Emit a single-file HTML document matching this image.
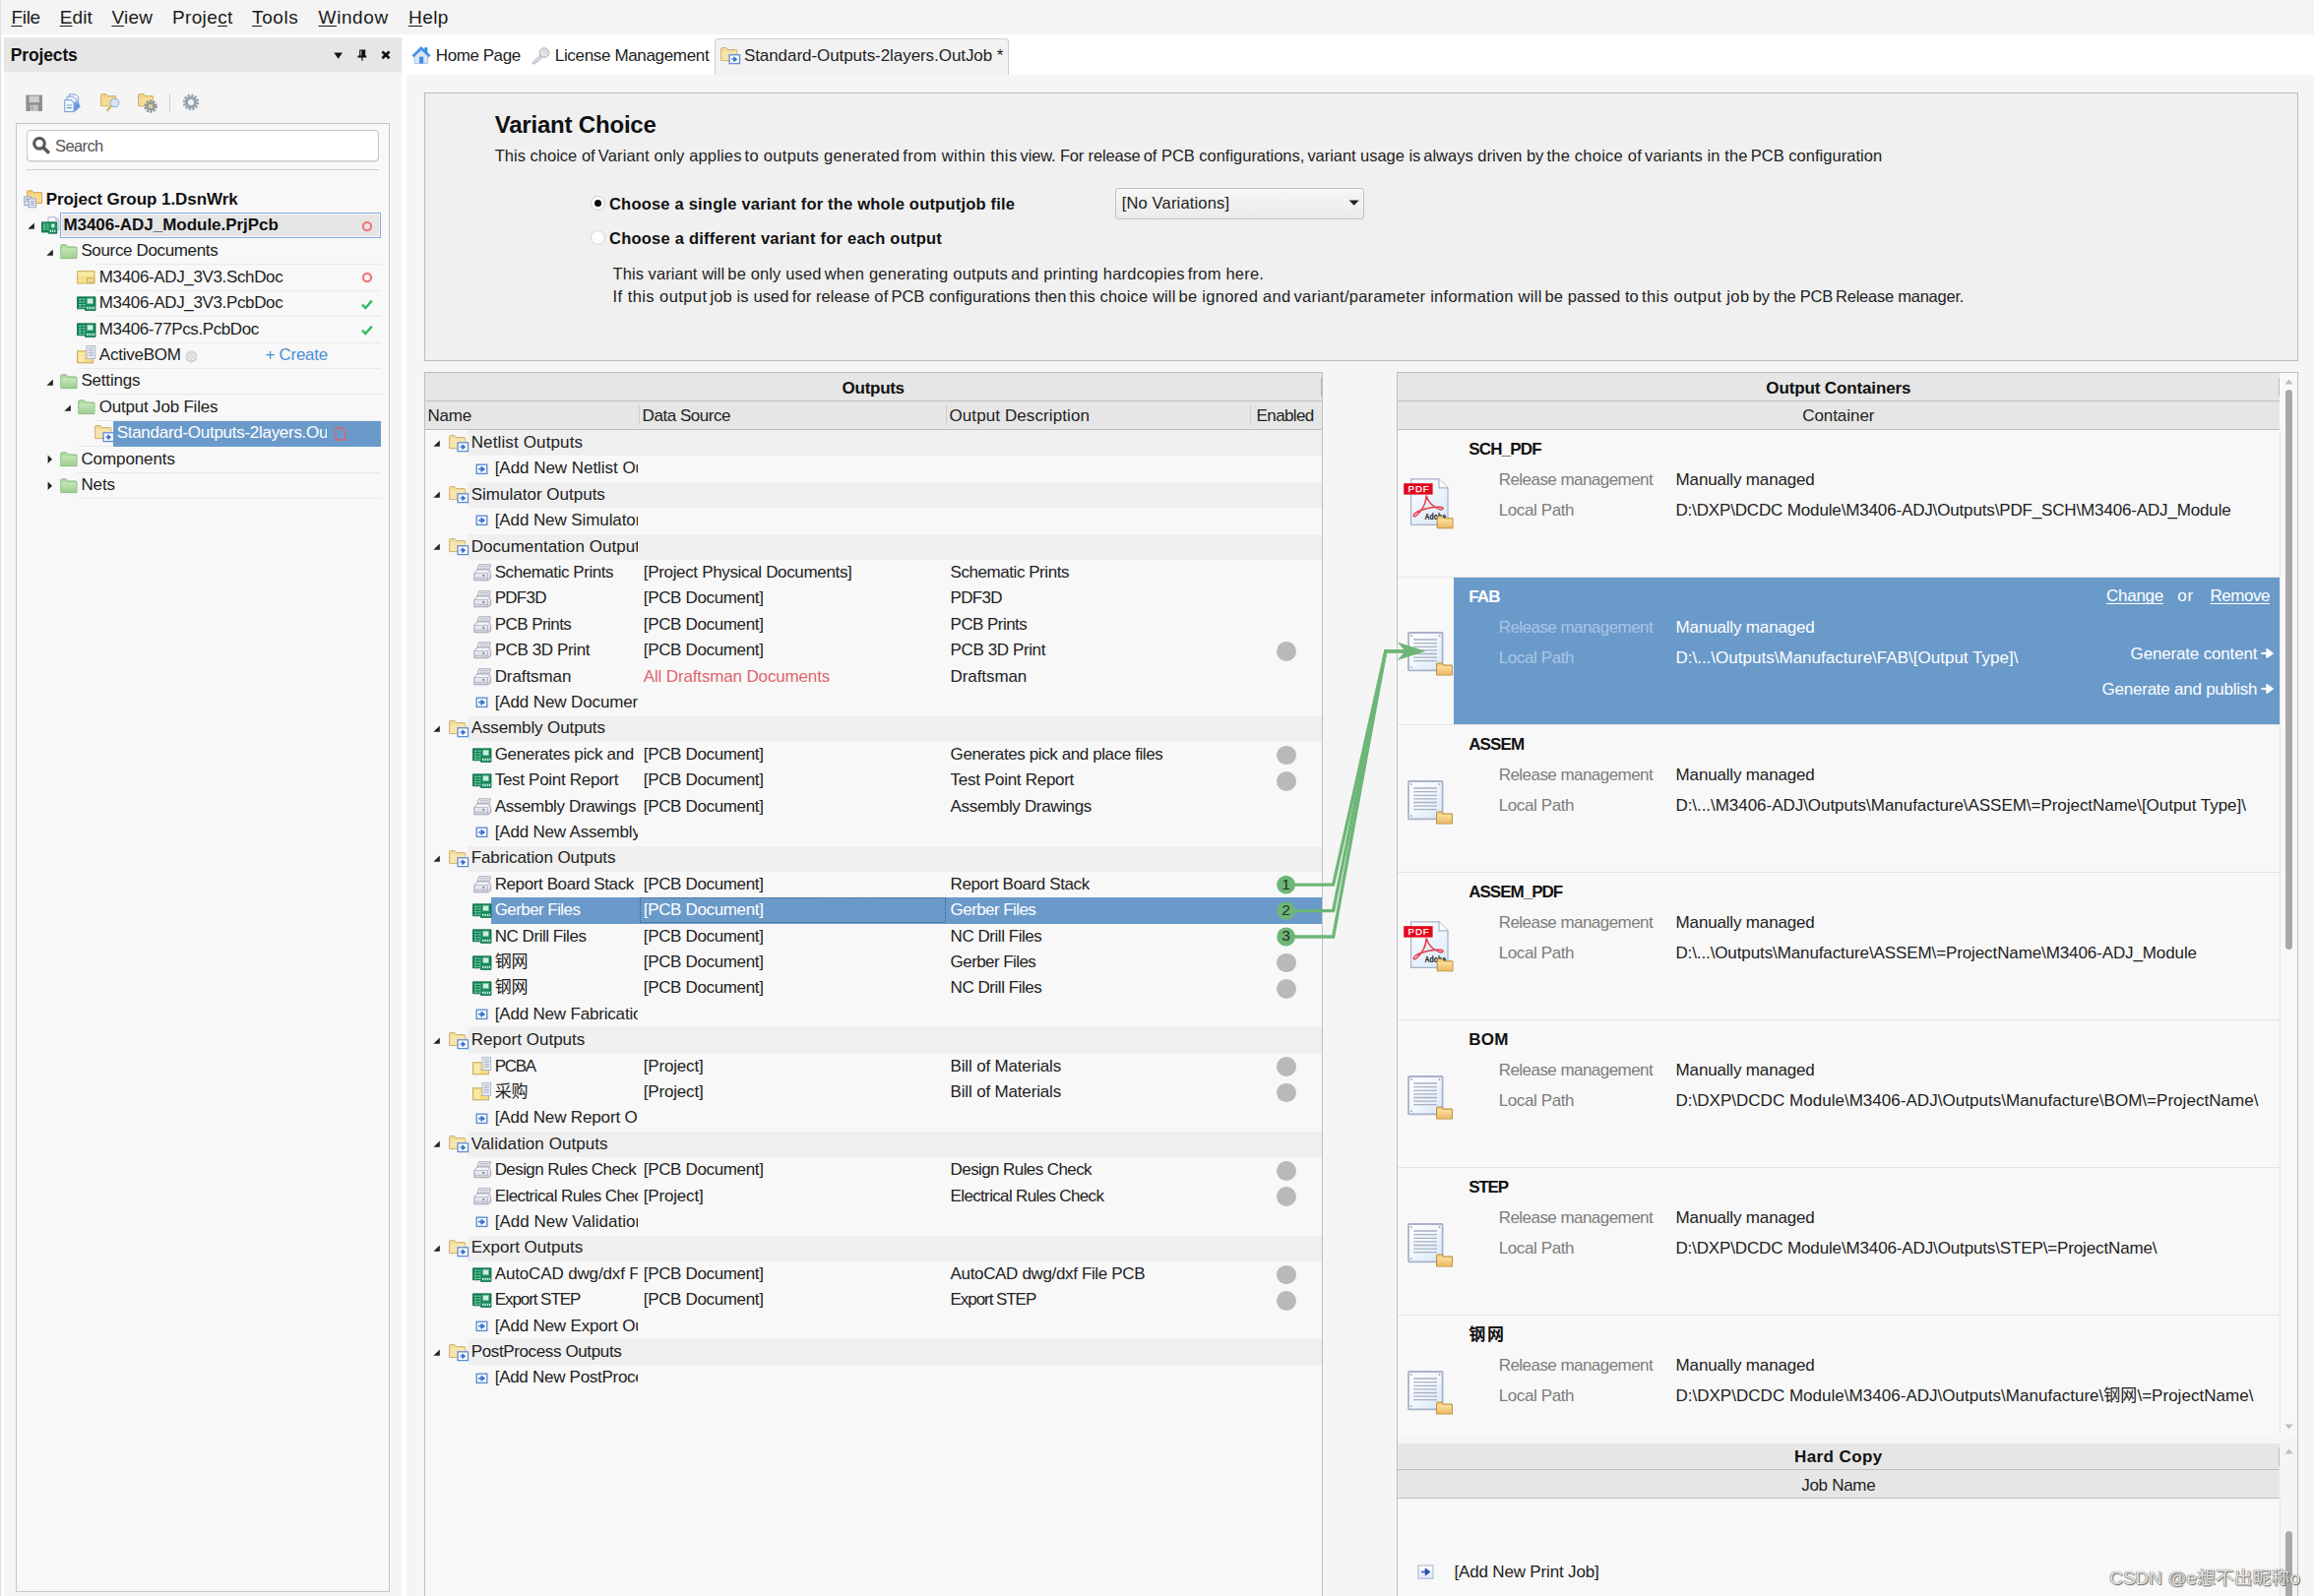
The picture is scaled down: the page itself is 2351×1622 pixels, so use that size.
<!DOCTYPE html>
<html><head><meta charset="utf-8"><title>Altium Designer - OutJob</title>
<style>
html,body{margin:0;padding:0;}
body{width:2351px;height:1622px;position:relative;overflow:hidden;background:#f5f5f5;font-family:"Liberation Sans","Noto Sans CJK SC",sans-serif;}
#root{position:absolute;left:0;top:0;width:2351px;height:1622px;overflow:hidden;}
#root div,#root span.t,#root svg{position:absolute;}
span.t{white-space:pre;display:block;}
u{text-decoration:underline;text-underline-offset:2px;text-decoration-skip-ink:none;}
</style></head><body><div id="root">
<div style="left:0.00px;top:0.00px;width:2351.00px;height:34.80px;background:#f4f4f4;"></div>
<div style="left:0.00px;top:34.80px;width:2351.00px;height:1622.00px;background:#ffffff;"></div>
<div style="left:0.00px;top:0.00px;width:1.00px;height:1622.00px;background:#dedede;"></div>
<div style="left:4.00px;top:38.40px;width:404.00px;height:34.30px;background:#e6e6e6;"></div>
<div style="left:4.00px;top:72.70px;width:404.00px;height:1549.30px;background:#f5f5f5;"></div>
<div style="left:413.00px;top:75.80px;width:1938.00px;height:1622.00px;background:#f5f5f5;"></div>
<span class="t" style="left:11.40px;top:5px;font-size:19px;line-height:25px;color:#1a1a1a;letter-spacing:-0.281px;"><u>F</u>ile</span>
<span class="t" style="left:60.70px;top:5px;font-size:19px;line-height:25px;color:#1a1a1a;letter-spacing:0.137px;"><u>E</u>dit</span>
<span class="t" style="left:113.40px;top:5px;font-size:19px;line-height:25px;color:#1a1a1a;letter-spacing:0.239px;"><u>V</u>iew</span>
<span class="t" style="left:175.00px;top:5px;font-size:19px;line-height:25px;color:#1a1a1a;letter-spacing:0.351px;">Proje<u>c</u>t</span>
<span class="t" style="left:256.10px;top:5px;font-size:19px;line-height:25px;color:#1a1a1a;letter-spacing:0.588px;"><u>T</u>ools</span>
<span class="t" style="left:323.60px;top:5px;font-size:19px;line-height:25px;color:#1a1a1a;letter-spacing:0.587px;"><u>W</u>indow</span>
<span class="t" style="left:415.00px;top:5px;font-size:19px;line-height:25px;color:#1a1a1a;letter-spacing:0.430px;"><u>H</u>elp</span>
<span class="t" style="left:10.70px;top:44px;font-size:17.5px;line-height:24px;color:#111;letter-spacing:-0.133px;font-weight:bold;">Projects</span>
<svg style="left:339.00px;top:52.90px" width="10" height="8" viewBox="0 0 10 8"><path d="M0.3 0.5 H9 L4.65 6.7 Z" fill="#111"/></svg>
<svg style="left:363.00px;top:49.60px" width="10" height="13" viewBox="0 0 10 13"><path d="M2.2 0.4 H8.2 V6.6 H2.2 Z M0.5 6.6 H9.2 V8.4 H0.5 Z M4.3 8.4 H5.5 V11.8 H4.3 Z" fill="#111"/><rect x="3.4" y="1.4" width="0.9" height="5" fill="#e6e6e6"/></svg>
<svg style="left:386.80px;top:51.20px" width="10" height="10" viewBox="0 0 10 10"><path d="M1.4 1.4 L8.6 8.2 M8.6 1.4 L1.4 8.2" stroke="#111" stroke-width="2.7"/></svg>
<svg style="left:26.00px;top:95.80px" width="18" height="18" viewBox="0 0 18 18"><rect x="0.4" y="0.6" width="16.6" height="16.4" fill="#8e8e8e"/>
<rect x="3.6" y="1.6" width="10.2" height="6.6" fill="#cfcfcf"/>
<rect x="4.6" y="10.6" width="8.2" height="6.4" fill="#c4c4c4"/>
<rect x="6" y="12.6" width="1.4" height="2.4" fill="#8e8e8e"/></svg>
<svg style="left:64.60px;top:95.00px" width="18" height="20" viewBox="0 0 18 20"><path d="M5.4 0.8 H11.6 L14.6 3.6 V13 H5.4 Z" fill="#eef3fb" stroke="#7ea3d8" stroke-width="1"/>
<path d="M3 3.2 H9 L12.4 6.2 V16 H3 Z" fill="#eef3fb" stroke="#7ea3d8" stroke-width="1"/>
<path d="M0.8 6.6 H7 L10 9.4 V18.6 H0.8 Z" fill="#f4f8fe" stroke="#6d96d2" stroke-width="1"/>
<path d="M2.8 12 H8 M2.8 14.6 H8" stroke="#6d96d2" stroke-width="1.1"/>
<path d="M10.4 8 L13.4 10.4 V6.4 L16.8 13.6 L10.4 19.2 Z" fill="#5b8fd8" opacity="0.85"/></svg>
<svg style="left:101.60px;top:95.20px" width="20" height="19" viewBox="0 0 20 19"><path d="M0.6 12.8 V1.6 Q0.6 0.6 1.6 0.6 H6 L7.4 2.6 H15.4 V12.8 Z" fill="#f1d286" stroke="#cfae62" stroke-width="1"/>
<rect x="1.4" y="3.8" width="13.4" height="8.4" fill="#f5dc98"/><path d="M7.2 17 L11.4 12.6" stroke="#d1b06a" stroke-width="2.2" stroke-linecap="round"/>
<circle cx="14.4" cy="9.4" r="4.4" fill="#d6e4f2" stroke="#9fb0c4" stroke-width="1.1"/></svg>
<svg style="left:139.80px;top:95.20px" width="20" height="20" viewBox="0 0 20 20"><path d="M0.6 12.8 V1.6 Q0.6 0.6 1.6 0.6 H6 L7.4 2.6 H15.4 V12.8 Z" fill="#f1d286" stroke="#cfae62" stroke-width="1"/>
<rect x="1.4" y="3.8" width="13.4" height="8.4" fill="#f5dc98"/><circle cx="13" cy="13" r="5.4" fill="none" stroke="#8a8f96" stroke-width="2.6" stroke-dasharray="2 1.4"/>
<circle cx="13" cy="13" r="3.9" fill="#9ea3aa" stroke="#8a8f96" stroke-width="1"/>
<circle cx="13" cy="13" r="2" fill="#f1d286"/></svg>
<div style="left:171.60px;top:95.00px;width:1.00px;height:19.00px;background:#cfcfcf;"></div>
<svg style="left:184.60px;top:95.40px" width="18" height="18" viewBox="0 0 18 18"><circle cx="9" cy="9" r="6.9" fill="none" stroke="#9aa5ad" stroke-width="2.8" stroke-dasharray="2.2 1.42"/>
<circle cx="9" cy="9" r="4.6" fill="none" stroke="#9aa5ad" stroke-width="3.4"/></svg>
<div style="left:16.00px;top:125.00px;width:380.00px;height:1493.00px;background:#f8f8f8;border:1px solid #c4c4c4;box-sizing:border-box;"></div>
<div style="left:26.60px;top:132.20px;width:358.40px;height:31.60px;background:#ffffff;border:1px solid #c6c6c6;border-radius:4px;box-sizing:border-box;box-shadow:0 1px 0 #e2e2e2;"></div>
<svg style="left:33.40px;top:139.20px" width="18" height="18" viewBox="0 0 18 18"><circle cx="7" cy="6.8" r="5.3" fill="none" stroke="#5a5a5a" stroke-width="3.2"/><path d="M11.4 11.2 L15.8 15.6" stroke="#5a5a5a" stroke-width="3.6" stroke-linecap="round"/></svg>
<span class="t" style="left:56.10px;top:137px;font-size:16.5px;line-height:22px;color:#555;letter-spacing:-0.630px;">Search</span>
<div style="left:27.00px;top:171.60px;width:358.00px;height:1.00px;background:#cdcdcd;"></div>
<div style="left:97.00px;top:268.40px;width:290.20px;height:1.00px;background:#e9e9e9;"></div>
<div style="left:97.00px;top:294.80px;width:290.20px;height:1.00px;background:#e9e9e9;"></div>
<div style="left:97.00px;top:321.20px;width:290.20px;height:1.00px;background:#e9e9e9;"></div>
<div style="left:97.00px;top:347.60px;width:290.20px;height:1.00px;background:#e9e9e9;"></div>
<div style="left:78.50px;top:374.00px;width:308.70px;height:1.00px;background:#e9e9e9;"></div>
<div style="left:97.00px;top:400.40px;width:290.20px;height:1.00px;background:#e9e9e9;"></div>
<div style="left:97.00px;top:426.80px;width:290.20px;height:1.00px;background:#e9e9e9;"></div>
<div style="left:78.50px;top:453.20px;width:308.70px;height:1.00px;background:#e9e9e9;"></div>
<div style="left:78.50px;top:479.60px;width:308.70px;height:1.00px;background:#e9e9e9;"></div>
<div style="left:78.50px;top:506.00px;width:308.70px;height:1.00px;background:#e9e9e9;"></div>
<svg style="left:23.60px;top:192.60px" width="20" height="19" viewBox="0 0 20 19"><path d="M3.6 11.6 V1.8 Q3.6 0.8 4.6 0.8 H8.6 L10 2.6 H18.6 V13.6 H3.6 Z" fill="#f3cd7c" stroke="#d0a856" stroke-width="1"/>
<rect x="4.6" y="3.8" width="13.4" height="9" fill="#f7d990"/>
<rect x="0.7" y="7" width="7" height="8.6" fill="#dfe4f0" stroke="#9aa3c2" stroke-width="1"/>
<rect x="5.2" y="9" width="7.2" height="8.8" fill="#eef1f8" stroke="#9aa3c2" stroke-width="1"/>
<path d="M2 9.4 H5 M2 11.4 H4.6 M6.8 11.6 H11 M6.8 13.4 H11 M6.8 15.2 H11" stroke="#8f99bb" stroke-width="0.9"/></svg>
<span class="t" style="left:46.70px;top:191px;font-size:17px;line-height:23px;color:#111;letter-spacing:-0.054px;font-weight:bold;">Project Group 1.DsnWrk</span>
<svg style="left:28.20px;top:226.10px" width="8" height="8" viewBox="0 0 8 8"><path d="M6.8 0.4 L6.8 6.8 L0.4 6.8 Z" fill="#222"/></svg>
<svg style="left:41.60px;top:219.60px" width="19" height="18" viewBox="0 0 19 18"><path d="M7 0.8 H14.6 L17.8 3.8 V13.6 H7 Z" fill="#f6f8fc" stroke="#aab4d4" stroke-width="1"/>
<path d="M14.6 0.8 V3.8 H17.8" fill="none" stroke="#aab4d4" stroke-width="0.9"/>
<path d="M0.5 5.8 H15.8 V17.2 H7.4 V16 H0.5 Z" fill="#168b5c" stroke="#0a6b45" stroke-width="0.8"/>
<rect x="10" y="7.4" width="3.6" height="3.8" fill="#d4ebe0" stroke="#5fb590" stroke-width="0.7"/>
<rect x="2" y="7.4" width="2" height="1.2" fill="#9fd8bd"/><rect x="4.8" y="7.4" width="3" height="1.2" fill="#6cc39d"/>
<rect x="2" y="9.8" width="2" height="1.2" fill="#9fd8bd"/><rect x="4.8" y="9.8" width="3" height="1.2" fill="#6cc39d"/>
<rect x="2" y="12.2" width="2" height="1.2" fill="#9fd8bd"/><rect x="4.8" y="12.2" width="3" height="1.2" fill="#6cc39d"/>
<rect x="8.6" y="13.6" width="1.3" height="2.4" fill="#c9ecd9"/><rect x="10.8" y="13.6" width="1.3" height="2.4" fill="#c9ecd9"/><rect x="13" y="13.6" width="1.3" height="2.4" fill="#c9ecd9"/></svg>
<div style="left:61.30px;top:216.40px;width:326.00px;height:25.60px;background:#e5e5e5;border:1px solid #86aedb;box-sizing:border-box;box-shadow:inset 0 0 0 1px #f4f7fb;"></div>
<span class="t" style="left:64.40px;top:217px;font-size:17px;line-height:23px;color:#111;letter-spacing:-0.030px;font-weight:bold;">M3406-ADJ_Module.PrjPcb</span>
<svg style="left:366.80px;top:223.60px" width="12" height="12" viewBox="0 0 12 12"><circle cx="6" cy="6" r="4.1" fill="none" stroke="#f2777a" stroke-width="2.2"/></svg>
<svg style="left:47.00px;top:252.50px" width="8" height="8" viewBox="0 0 8 8"><path d="M6.8 0.4 L6.8 6.8 L0.4 6.8 Z" fill="#222"/></svg>
<svg style="left:60.60px;top:248.00px" width="18" height="16" viewBox="0 0 18 16"><defs><linearGradient id="gf" x1="0" y1="0" x2="0" y2="1"><stop offset="0" stop-color="#c4e6b8"/><stop offset="1" stop-color="#9dcf90"/></linearGradient></defs>
<path d="M0.8 14.6 V2.2 Q0.8 0.8 2.2 0.8 H6.2 L8 3 H16 Q17 3 17 4 V14.6 Z" fill="#b3dba6" stroke="#86b77c" stroke-width="1"/>
<rect x="1.4" y="4.4" width="15" height="9.8" fill="url(#gf)"/></svg>
<span class="t" style="left:82.40px;top:243px;font-size:17px;line-height:23px;color:#1e1e1e;letter-spacing:-0.355px;">Source Documents</span>
<svg style="left:78.00px;top:275.00px" width="19" height="14" viewBox="0 0 19 14"><rect x="0.6" y="0.6" width="17.4" height="12.4" fill="#f7e08c" stroke="#c9b15e" stroke-width="1"/>
<rect x="1.6" y="1.6" width="15.4" height="4" fill="#fbeaa6"/>
<rect x="10.4" y="7.4" width="7.2" height="5.2" fill="#e9cf76" stroke="#c9b15e" stroke-width="0.8"/>
<rect x="11.4" y="9.6" width="5.4" height="1" fill="#f7e7a8"/></svg>
<span class="t" style="left:100.80px;top:270px;font-size:17px;line-height:23px;color:#1e1e1e;letter-spacing:-0.361px;">M3406-ADJ_3V3.SchDoc</span>
<svg style="left:366.80px;top:276.40px" width="12" height="12" viewBox="0 0 12 12"><circle cx="6" cy="6" r="4.1" fill="none" stroke="#f2777a" stroke-width="2.2"/></svg>
<svg style="left:77.80px;top:301.40px" width="20" height="15" viewBox="0 0 20 15"><path d="M0.5 0.8 H19 V14.4 H8.5 V12.8 H0.5 Z" fill="#0e8457" stroke="#0a6b45" stroke-width="0.8"/>
<rect x="10.6" y="2.2" width="6" height="5.6" fill="#d4ebe0" stroke="#5fb590" stroke-width="0.8"/>
<rect x="2.2" y="2.6" width="2.2" height="1.3" fill="#9fd8bd"/><rect x="5.4" y="2.6" width="3.4" height="1.3" fill="#6cc39d"/>
<rect x="2.2" y="5.3" width="2.2" height="1.3" fill="#9fd8bd"/><rect x="5.4" y="5.3" width="3.4" height="1.3" fill="#6cc39d"/>
<rect x="2.2" y="8" width="2.2" height="1.3" fill="#9fd8bd"/><rect x="5.4" y="8" width="3.4" height="1.3" fill="#6cc39d"/>
<rect x="2.2" y="10.6" width="2.2" height="1.3" fill="#9fd8bd"/><rect x="5.4" y="10.6" width="3.4" height="1.3" fill="#6cc39d"/>
<rect x="10" y="10.6" width="1.5" height="2.6" fill="#c9ecd9"/><rect x="12.4" y="10.6" width="1.5" height="2.6" fill="#c9ecd9"/><rect x="14.8" y="10.6" width="1.5" height="2.6" fill="#c9ecd9"/><rect x="17" y="10.6" width="1.2" height="2.6" fill="#c9ecd9"/></svg>
<span class="t" style="left:100.80px;top:296px;font-size:17px;line-height:23px;color:#1e1e1e;letter-spacing:-0.361px;">M3406-ADJ_3V3.PcbDoc</span>
<svg style="left:367.00px;top:304.00px" width="12" height="11" viewBox="0 0 12 11"><path d="M1 5.6 L4.4 9 L10.8 1.6" fill="none" stroke="#2dbe60" stroke-width="2.4"/></svg>
<svg style="left:77.80px;top:327.80px" width="20" height="15" viewBox="0 0 20 15"><path d="M0.5 0.8 H19 V14.4 H8.5 V12.8 H0.5 Z" fill="#0e8457" stroke="#0a6b45" stroke-width="0.8"/>
<rect x="10.6" y="2.2" width="6" height="5.6" fill="#d4ebe0" stroke="#5fb590" stroke-width="0.8"/>
<rect x="2.2" y="2.6" width="2.2" height="1.3" fill="#9fd8bd"/><rect x="5.4" y="2.6" width="3.4" height="1.3" fill="#6cc39d"/>
<rect x="2.2" y="5.3" width="2.2" height="1.3" fill="#9fd8bd"/><rect x="5.4" y="5.3" width="3.4" height="1.3" fill="#6cc39d"/>
<rect x="2.2" y="8" width="2.2" height="1.3" fill="#9fd8bd"/><rect x="5.4" y="8" width="3.4" height="1.3" fill="#6cc39d"/>
<rect x="2.2" y="10.6" width="2.2" height="1.3" fill="#9fd8bd"/><rect x="5.4" y="10.6" width="3.4" height="1.3" fill="#6cc39d"/>
<rect x="10" y="10.6" width="1.5" height="2.6" fill="#c9ecd9"/><rect x="12.4" y="10.6" width="1.5" height="2.6" fill="#c9ecd9"/><rect x="14.8" y="10.6" width="1.5" height="2.6" fill="#c9ecd9"/><rect x="17" y="10.6" width="1.2" height="2.6" fill="#c9ecd9"/></svg>
<span class="t" style="left:100.80px;top:323px;font-size:17px;line-height:23px;color:#1e1e1e;letter-spacing:-0.391px;">M3406-77Pcs.PcbDoc</span>
<svg style="left:367.00px;top:330.40px" width="12" height="11" viewBox="0 0 12 11"><path d="M1 5.6 L4.4 9 L10.8 1.6" fill="none" stroke="#2dbe60" stroke-width="2.4"/></svg>
<svg style="left:78.00px;top:351.20px" width="20" height="19" viewBox="0 0 20 19"><rect x="0.6" y="5.8" width="15.8" height="12" fill="#f4dc84" stroke="#c4a85a" stroke-width="1"/>
<rect x="1.6" y="6.8" width="6" height="10" fill="#f9e9a4"/>
<path d="M8.6 13.4 H16 " stroke="#c4a85a" stroke-width="0.9"/>
<rect x="10" y="0.6" width="8.6" height="12.8" fill="#e9edf5" stroke="#b0b8cc" stroke-width="1"/>
<path d="M11.8 3.1 H17 M11.8 5.4 H17 M11.8 7.7 H17 M11.8 10 H17" stroke="#8f98b2" stroke-width="0.8"/></svg>
<span class="t" style="left:100.80px;top:349px;font-size:17px;line-height:23px;color:#1e1e1e;letter-spacing:-0.226px;">ActiveBOM</span>
<svg style="left:188.40px;top:355.80px" width="13" height="13" viewBox="0 0 13 13"><circle cx="6.5" cy="6.5" r="6" fill="#d4d4d4"/><circle cx="6.5" cy="6.5" r="3.4" fill="none" stroke="#f4f4f4" stroke-width="1"/><path d="M4.4 4.4 L8.6 8.6 M8.6 4.4 L4.4 8.6" stroke="#f4f4f4" stroke-width="0.9"/></svg>
<span class="t" style="left:269.40px;top:349px;font-size:17px;line-height:23px;color:#4a8fd4;letter-spacing:-0.273px;">+ Create</span>
<svg style="left:47.00px;top:384.50px" width="8" height="8" viewBox="0 0 8 8"><path d="M6.8 0.4 L6.8 6.8 L0.4 6.8 Z" fill="#222"/></svg>
<svg style="left:60.60px;top:380.00px" width="18" height="16" viewBox="0 0 18 16"><defs><linearGradient id="gf" x1="0" y1="0" x2="0" y2="1"><stop offset="0" stop-color="#c4e6b8"/><stop offset="1" stop-color="#9dcf90"/></linearGradient></defs>
<path d="M0.8 14.6 V2.2 Q0.8 0.8 2.2 0.8 H6.2 L8 3 H16 Q17 3 17 4 V14.6 Z" fill="#b3dba6" stroke="#86b77c" stroke-width="1"/>
<rect x="1.4" y="4.4" width="15" height="9.8" fill="url(#gf)"/></svg>
<span class="t" style="left:82.40px;top:375px;font-size:17px;line-height:23px;color:#1e1e1e;letter-spacing:-0.180px;">Settings</span>
<svg style="left:64.60px;top:410.90px" width="8" height="8" viewBox="0 0 8 8"><path d="M6.8 0.4 L6.8 6.8 L0.4 6.8 Z" fill="#222"/></svg>
<svg style="left:78.60px;top:406.40px" width="18" height="16" viewBox="0 0 18 16"><defs><linearGradient id="gf" x1="0" y1="0" x2="0" y2="1"><stop offset="0" stop-color="#c4e6b8"/><stop offset="1" stop-color="#9dcf90"/></linearGradient></defs>
<path d="M0.8 14.6 V2.2 Q0.8 0.8 2.2 0.8 H6.2 L8 3 H16 Q17 3 17 4 V14.6 Z" fill="#b3dba6" stroke="#86b77c" stroke-width="1"/>
<rect x="1.4" y="4.4" width="15" height="9.8" fill="url(#gf)"/></svg>
<span class="t" style="left:100.80px;top:402px;font-size:17px;line-height:23px;color:#1e1e1e;letter-spacing:-0.205px;">Output Job Files</span>
<svg style="left:96.00px;top:432.00px" width="21" height="18" viewBox="0 0 21 18"><path d="M0.6 13.6 V1.8 Q0.6 0.6 1.8 0.6 H6 L7.6 2.6 H15.8 Q16.8 2.6 16.8 3.6 V13.6 Z" fill="#f3dc9c" stroke="#cbb070" stroke-width="1"/>
<rect x="1.4" y="4" width="14.8" height="9" fill="#f7e4ad"/>
<rect x="9.1" y="7.8" width="10.4" height="8.8" fill="#fff" stroke="#5b8dd6" stroke-width="1.3"/>
<path d="M11.2 12.2 H15 M13.8 10.2 L16.4 12.2 L13.8 14.2 Z" stroke="#3f74c8" stroke-width="1.3" fill="#3f74c8" stroke-linejoin="round"/></svg>
<div style="left:115.20px;top:427.60px;width:272.00px;height:26.00px;background:#6a9aca;"></div>
<span class="t" style="left:118.70px;top:428px;font-size:17px;line-height:23px;color:#ffffff;letter-spacing:-0.280px;width:213.70px;overflow:hidden;">Standard-Outputs-2layers.OutJob</span>
<svg style="left:339.60px;top:434.40px" width="12" height="14" viewBox="0 0 12 14"><path d="M1.2 1 H7.4 L10.8 4.2 V13 H1.2 Z" fill="none" stroke="#e0606a" stroke-width="1.3"/></svg>
<svg style="left:47.60px;top:462.40px" width="6" height="10" viewBox="0 0 6 10"><path d="M0.6 0.6 L5 4.8 L0.6 9 Z" fill="#222"/></svg>
<svg style="left:60.60px;top:459.20px" width="18" height="16" viewBox="0 0 18 16"><defs><linearGradient id="gf" x1="0" y1="0" x2="0" y2="1"><stop offset="0" stop-color="#c4e6b8"/><stop offset="1" stop-color="#9dcf90"/></linearGradient></defs>
<path d="M0.8 14.6 V2.2 Q0.8 0.8 2.2 0.8 H6.2 L8 3 H16 Q17 3 17 4 V14.6 Z" fill="#b3dba6" stroke="#86b77c" stroke-width="1"/>
<rect x="1.4" y="4.4" width="15" height="9.8" fill="url(#gf)"/></svg>
<span class="t" style="left:82.40px;top:455px;font-size:17px;line-height:23px;color:#1e1e1e;letter-spacing:-0.089px;">Components</span>
<svg style="left:47.60px;top:488.80px" width="6" height="10" viewBox="0 0 6 10"><path d="M0.6 0.6 L5 4.8 L0.6 9 Z" fill="#222"/></svg>
<svg style="left:60.60px;top:485.60px" width="18" height="16" viewBox="0 0 18 16"><defs><linearGradient id="gf" x1="0" y1="0" x2="0" y2="1"><stop offset="0" stop-color="#c4e6b8"/><stop offset="1" stop-color="#9dcf90"/></linearGradient></defs>
<path d="M0.8 14.6 V2.2 Q0.8 0.8 2.2 0.8 H6.2 L8 3 H16 Q17 3 17 4 V14.6 Z" fill="#b3dba6" stroke="#86b77c" stroke-width="1"/>
<rect x="1.4" y="4.4" width="15" height="9.8" fill="url(#gf)"/></svg>
<span class="t" style="left:82.40px;top:481px;font-size:17px;line-height:23px;color:#1e1e1e;letter-spacing:-0.117px;">Nets</span>
<svg style="left:418.40px;top:46.40px" width="20" height="20" viewBox="0 0 20 20"><path d="M3.2 9.6 V18.4 H16.6 V9.6 L10 3.6 Z" fill="#dbe6f4" stroke="#a9c3e6" stroke-width="1"/>
<path d="M0.8 10.4 L10 1.4 L13.6 4.9 V2.6 H16 V7.2 L19.2 10.4 L17.6 11.8 L10 4.6 L2.4 11.8 Z" fill="#3b8df0" stroke="#2f7fe0" stroke-width="0.6"/>
<rect x="8" y="11.6" width="4.2" height="6.8" fill="#3b8df0"/></svg>
<span class="t" style="left:442.80px;top:45px;font-size:17px;line-height:23px;color:#222;letter-spacing:-0.431px;">Home Page</span>
<svg style="left:539.60px;top:47.60px" width="19" height="18" viewBox="0 0 19 18"><path d="M1 15.6 L9.2 7.6 L11.4 9.8 L5.6 15.4 L4.6 14.6 L3.4 16.8 L1.4 17 Z" fill="#d9dce2" stroke="#a9adb8" stroke-width="0.9"/>
<circle cx="13" cy="5.6" r="4.8" fill="#e4e6ea" stroke="#a9adb8" stroke-width="1"/>
<circle cx="14.4" cy="4.2" r="1.5" fill="#fff" stroke="#b5b9c3" stroke-width="0.8"/></svg>
<span class="t" style="left:563.80px;top:45px;font-size:17px;line-height:23px;color:#222;letter-spacing:-0.336px;">License Management</span>
<div style="left:726.00px;top:38.60px;width:298.60px;height:37.60px;background:#f2f2f2;border:1px solid #cfcfcf;border-bottom:none;border-radius:4px 4px 0 0;box-sizing:border-box;"></div>
<svg style="left:731.60px;top:47.80px" width="21" height="18" viewBox="0 0 21 18"><path d="M0.6 13.6 V1.8 Q0.6 0.6 1.8 0.6 H6 L7.6 2.6 H15.8 Q16.8 2.6 16.8 3.6 V13.6 Z" fill="#f3dc9c" stroke="#cbb070" stroke-width="1"/>
<rect x="1.4" y="4" width="14.8" height="9" fill="#f7e4ad"/>
<rect x="9.1" y="7.8" width="10.4" height="8.8" fill="#fff" stroke="#5b8dd6" stroke-width="1.3"/>
<path d="M11.2 12.2 H15 M13.8 10.2 L16.4 12.2 L13.8 14.2 Z" stroke="#3f74c8" stroke-width="1.3" fill="#3f74c8" stroke-linejoin="round"/></svg>
<span class="t" style="left:755.90px;top:45px;font-size:17px;line-height:23px;color:#222;letter-spacing:-0.062px;">Standard-Outputs-2layers.OutJob *</span>
<div style="left:431.00px;top:94.00px;width:1904.00px;height:273.40px;background:#f0f0f0;border:1px solid #bcbcbc;box-sizing:border-box;"></div>
<span class="t" style="left:502.70px;top:111px;font-size:24px;line-height:31px;color:#111;letter-spacing:-0.195px;font-weight:bold;">Variant Choice</span>
<span class="t" style="left:502.70px;top:147px;font-size:16.5px;line-height:22px;color:#222;letter-spacing:0.015px;">This choice of</span>
<span class="t" style="left:607.76px;top:147px;font-size:16.5px;line-height:22px;color:#222;letter-spacing:0.150px;">Variant only applies</span>
<span class="t" style="left:756.60px;top:147px;font-size:16.5px;line-height:22px;color:#222;letter-spacing:0.310px;">to outputs generated</span>
<span class="t" style="left:917.24px;top:147px;font-size:16.5px;line-height:22px;color:#222;letter-spacing:0.392px;">from within this</span>
<span class="t" style="left:1036.59px;top:147px;font-size:16.5px;line-height:22px;color:#222;letter-spacing:-0.161px;">view. For release</span>
<span class="t" style="left:1161.63px;top:147px;font-size:16.5px;line-height:22px;color:#222;letter-spacing:-0.022px;">of PCB configurations,</span>
<span class="t" style="left:1328.38px;top:147px;font-size:16.5px;line-height:22px;color:#222;letter-spacing:-0.046px;">variant usage is</span>
<span class="t" style="left:1446.27px;top:147px;font-size:16.5px;line-height:22px;color:#222;letter-spacing:0.008px;">always driven by</span>
<span class="t" style="left:1571.45px;top:147px;font-size:16.5px;line-height:22px;color:#222;letter-spacing:0.229px;">the choice of</span>
<span class="t" style="left:1671.04px;top:147px;font-size:16.5px;line-height:22px;color:#222;letter-spacing:0.123px;">variants in the</span>
<span class="t" style="left:1778.68px;top:147px;font-size:16.5px;line-height:22px;color:#222;letter-spacing:0.031px;">PCB configuration</span>
<div style="left:599.60px;top:199.10px;width:15.00px;height:15.00px;background:#fff;border:1px solid #c9c9c9;border-radius:50%;box-sizing:border-box;"></div>
<div style="left:603.70px;top:203.10px;width:7.20px;height:7.20px;background:#0a0a0a;border-radius:50%;"></div>
<span class="t" style="left:619.00px;top:196px;font-size:16.5px;line-height:22px;color:#111;letter-spacing:0.205px;font-weight:bold;">Choose a single variant for the whole outputjob file</span>
<div style="left:599.60px;top:234.00px;width:15.00px;height:15.00px;background:#fdfdfd;border:1px solid #d4d4d4;border-radius:50%;box-sizing:border-box;"></div>
<span class="t" style="left:619.00px;top:231px;font-size:16.5px;line-height:22px;color:#111;letter-spacing:0.235px;font-weight:bold;">Choose a different variant for each output</span>
<div style="left:1132.80px;top:191.20px;width:253.00px;height:31.60px;background:linear-gradient(#f6f6f6,#ebebeb);border:1px solid #c2c2c2;border-radius:3px;box-sizing:border-box;"></div>
<span class="t" style="left:1139.70px;top:195px;font-size:16.5px;line-height:22px;color:#222;letter-spacing:0.167px;">[No Variations]</span>
<svg style="left:1370.40px;top:203.40px" width="12" height="7" viewBox="0 0 12 7"><path d="M0.6 0.6 H10.8 L5.7 5.8 Z" fill="#222"/></svg>
<span class="t" style="left:622.60px;top:267px;font-size:16.5px;line-height:22px;color:#222;letter-spacing:0.052px;">This variant will</span>
<span class="t" style="left:739.32px;top:267px;font-size:16.5px;line-height:22px;color:#222;letter-spacing:0.140px;">be only used</span>
<span class="t" style="left:837.63px;top:267px;font-size:16.5px;line-height:22px;color:#222;letter-spacing:0.251px;">when generating outputs</span>
<span class="t" style="left:1027.18px;top:267px;font-size:16.5px;line-height:22px;color:#222;letter-spacing:0.217px;">and printing hardcopies</span>
<span class="t" style="left:1206.78px;top:267px;font-size:16.5px;line-height:22px;color:#222;letter-spacing:0.211px;">from here.</span>
<span class="t" style="left:622.60px;top:290px;font-size:16.5px;line-height:22px;color:#222;letter-spacing:0.428px;">If this output</span>
<span class="t" style="left:721.54px;top:290px;font-size:16.5px;line-height:22px;color:#222;letter-spacing:0.111px;">job is used</span>
<span class="t" style="left:804.71px;top:290px;font-size:16.5px;line-height:22px;color:#222;letter-spacing:0.094px;">for release of</span>
<span class="t" style="left:905.39px;top:290px;font-size:16.5px;line-height:22px;color:#222;letter-spacing:0.007px;">PCB configurations then</span>
<span class="t" style="left:1086.57px;top:290px;font-size:16.5px;line-height:22px;color:#222;letter-spacing:0.156px;">this choice will</span>
<span class="t" style="left:1197.59px;top:290px;font-size:16.5px;line-height:22px;color:#222;letter-spacing:0.267px;">be ignored and</span>
<span class="t" style="left:1314.49px;top:290px;font-size:16.5px;line-height:22px;color:#222;letter-spacing:0.267px;">variant/parameter information will</span>
<span class="t" style="left:1569.62px;top:290px;font-size:16.5px;line-height:22px;color:#222;letter-spacing:0.060px;">be passed to</span>
<span class="t" style="left:1667.89px;top:290px;font-size:16.5px;line-height:22px;color:#222;letter-spacing:0.470px;">this output job</span>
<span class="t" style="left:1780.74px;top:290px;font-size:16.5px;line-height:22px;color:#222;letter-spacing:-0.222px;">by the PCB</span>
<span class="t" style="left:1865.04px;top:290px;font-size:16.5px;line-height:22px;color:#222;letter-spacing:-0.242px;">Release manager.</span>
<div style="left:431.20px;top:378.00px;width:912.80px;height:1622.00px;background:#f8f8f8;border:1px solid #bfbfbf;border-bottom:none;box-sizing:border-box;"></div>
<div style="left:432.20px;top:379.00px;width:910.80px;height:28.00px;background:#e6e6e6;"></div>
<div style="left:432.20px;top:407.00px;width:910.80px;height:1.00px;background:#bdbdbd;"></div>
<div style="left:432.20px;top:408.00px;width:910.80px;height:28.00px;background:#e6e6e6;"></div>
<div style="left:432.20px;top:436.00px;width:910.80px;height:1.00px;background:#bdbdbd;"></div>
<div style="left:1341.80px;top:384.40px;width:1.00px;height:18.80px;background:#b5b5b5;"></div>
<div style="left:649.40px;top:412.00px;width:1.00px;height:20.00px;background:#cfcfcf;"></div>
<div style="left:961.30px;top:412.00px;width:1.00px;height:20.00px;background:#cfcfcf;"></div>
<div style="left:1270.40px;top:412.00px;width:1.00px;height:20.00px;background:#cfcfcf;"></div>
<span class="t" style="left:855.60px;top:383px;font-size:17px;line-height:23px;color:#111;letter-spacing:-0.279px;font-weight:bold;">Outputs</span>
<span class="t" style="left:434.40px;top:411px;font-size:17px;line-height:23px;color:#222;letter-spacing:-0.215px;">Name</span>
<span class="t" style="left:652.60px;top:411px;font-size:17px;line-height:23px;color:#222;letter-spacing:-0.455px;">Data Source</span>
<span class="t" style="left:964.50px;top:411px;font-size:17px;line-height:23px;color:#222;letter-spacing:0.095px;">Output Description</span>
<span class="t" style="left:1276.60px;top:411px;font-size:17px;line-height:23px;color:#222;letter-spacing:-0.627px;">Enabled</span>
<div style="left:475.00px;top:437.20px;width:868.00px;height:26.20px;background:#efefef;"></div>
<svg style="left:439.80px;top:446.60px" width="8" height="8" viewBox="0 0 8 8"><path d="M6.8 0.4 L6.8 6.8 L0.4 6.8 Z" fill="#222"/></svg>
<svg style="left:455.60px;top:441.60px" width="21" height="18" viewBox="0 0 21 18"><path d="M0.6 13.6 V1.8 Q0.6 0.6 1.8 0.6 H6 L7.6 2.6 H15.8 Q16.8 2.6 16.8 3.6 V13.6 Z" fill="#f3dc9c" stroke="#cbb070" stroke-width="1"/>
<rect x="1.4" y="4" width="14.8" height="9" fill="#f7e4ad"/>
<rect x="9.1" y="7.8" width="10.4" height="8.8" fill="#fff" stroke="#5b8dd6" stroke-width="1.3"/>
<path d="M11.2 12.2 H15 M13.8 10.2 L16.4 12.2 L13.8 14.2 Z" stroke="#3f74c8" stroke-width="1.3" fill="#3f74c8" stroke-linejoin="round"/></svg>
<span class="t" style="left:478.70px;top:438px;font-size:17px;line-height:23px;color:#222;letter-spacing:0.133px;width:169.50px;overflow:hidden;">Netlist Outputs</span>
<svg style="left:483.30px;top:470.60px" width="13" height="12" viewBox="0 0 13 12"><rect x="1.2" y="1.2" width="10.6" height="9.2" fill="#fff" stroke="#5b8dd6" stroke-width="1.4"/>
<path d="M3 5.8 H7 M6 3.7 L9.2 5.8 L6 7.9 Z" stroke="#3f74c8" stroke-width="1.4" fill="#3f74c8" stroke-linejoin="round"/></svg>
<span class="t" style="left:502.70px;top:464px;font-size:17px;line-height:23px;color:#222;letter-spacing:-0.039px;width:145.50px;overflow:hidden;">[Add New Netlist Output]</span>
<div style="left:475.00px;top:490.00px;width:868.00px;height:26.20px;background:#efefef;"></div>
<svg style="left:439.80px;top:499.40px" width="8" height="8" viewBox="0 0 8 8"><path d="M6.8 0.4 L6.8 6.8 L0.4 6.8 Z" fill="#222"/></svg>
<svg style="left:455.60px;top:494.40px" width="21" height="18" viewBox="0 0 21 18"><path d="M0.6 13.6 V1.8 Q0.6 0.6 1.8 0.6 H6 L7.6 2.6 H15.8 Q16.8 2.6 16.8 3.6 V13.6 Z" fill="#f3dc9c" stroke="#cbb070" stroke-width="1"/>
<rect x="1.4" y="4" width="14.8" height="9" fill="#f7e4ad"/>
<rect x="9.1" y="7.8" width="10.4" height="8.8" fill="#fff" stroke="#5b8dd6" stroke-width="1.3"/>
<path d="M11.2 12.2 H15 M13.8 10.2 L16.4 12.2 L13.8 14.2 Z" stroke="#3f74c8" stroke-width="1.3" fill="#3f74c8" stroke-linejoin="round"/></svg>
<span class="t" style="left:478.70px;top:491px;font-size:17px;line-height:23px;color:#222;letter-spacing:0.008px;width:169.50px;overflow:hidden;">Simulator Outputs</span>
<svg style="left:483.30px;top:523.40px" width="13" height="12" viewBox="0 0 13 12"><rect x="1.2" y="1.2" width="10.6" height="9.2" fill="#fff" stroke="#5b8dd6" stroke-width="1.4"/>
<path d="M3 5.8 H7 M6 3.7 L9.2 5.8 L6 7.9 Z" stroke="#3f74c8" stroke-width="1.4" fill="#3f74c8" stroke-linejoin="round"/></svg>
<span class="t" style="left:502.70px;top:517px;font-size:17px;line-height:23px;color:#222;letter-spacing:-0.093px;width:145.50px;overflow:hidden;">[Add New Simulator Output]</span>
<div style="left:475.00px;top:542.80px;width:868.00px;height:26.20px;background:#efefef;"></div>
<svg style="left:439.80px;top:552.20px" width="8" height="8" viewBox="0 0 8 8"><path d="M6.8 0.4 L6.8 6.8 L0.4 6.8 Z" fill="#222"/></svg>
<svg style="left:455.60px;top:547.20px" width="21" height="18" viewBox="0 0 21 18"><path d="M0.6 13.6 V1.8 Q0.6 0.6 1.8 0.6 H6 L7.6 2.6 H15.8 Q16.8 2.6 16.8 3.6 V13.6 Z" fill="#f3dc9c" stroke="#cbb070" stroke-width="1"/>
<rect x="1.4" y="4" width="14.8" height="9" fill="#f7e4ad"/>
<rect x="9.1" y="7.8" width="10.4" height="8.8" fill="#fff" stroke="#5b8dd6" stroke-width="1.3"/>
<path d="M11.2 12.2 H15 M13.8 10.2 L16.4 12.2 L13.8 14.2 Z" stroke="#3f74c8" stroke-width="1.3" fill="#3f74c8" stroke-linejoin="round"/></svg>
<span class="t" style="left:478.70px;top:544px;font-size:17px;line-height:23px;color:#222;letter-spacing:0.067px;width:169.50px;overflow:hidden;">Documentation Outputs</span>
<svg style="left:480.60px;top:573.20px" width="19" height="18" viewBox="0 0 19 18"><defs><linearGradient id="pg" x1="0" y1="0" x2="0" y2="1"><stop offset="0" stop-color="#fdfdfe"/><stop offset="1" stop-color="#cfd3de"/></linearGradient></defs>
<path d="M5.6 0.8 H17.4 L15.8 6 H4 Z" fill="#f4f5f8" stroke="#9a9ead" stroke-width="0.9"/>
<path d="M6.6 2.6 H15.6 M6.2 4.2 H15.2" stroke="#b4b8c6" stroke-width="0.9"/>
<path d="M0.8 9.6 L4 6 H15.8 L17.6 9.6 V15 L14.6 16.8 H0.8 Z" fill="url(#pg)" stroke="#9a9ead" stroke-width="0.9"/>
<path d="M0.8 9.6 H14.4 L17.6 6.4 M14.4 9.6 V16.6" stroke="#a9adbb" stroke-width="0.8" fill="none"/>
<path d="M1.4 14.4 H14" stroke="#b9bdca" stroke-width="1"/>
<rect x="9.6" y="11" width="1.2" height="1.8" fill="#4a4e5c"/></svg>
<span class="t" style="left:502.70px;top:570px;font-size:17px;line-height:23px;color:#222;letter-spacing:-0.447px;width:145.50px;overflow:hidden;">Schematic Prints</span>
<span class="t" style="left:653.80px;top:570px;font-size:17px;line-height:23px;color:#222;letter-spacing:-0.335px;">[Project Physical Documents]</span>
<span class="t" style="left:965.60px;top:570px;font-size:17px;line-height:23px;color:#222;letter-spacing:-0.447px;">Schematic Prints</span>
<svg style="left:480.60px;top:599.60px" width="19" height="18" viewBox="0 0 19 18"><defs><linearGradient id="pg" x1="0" y1="0" x2="0" y2="1"><stop offset="0" stop-color="#fdfdfe"/><stop offset="1" stop-color="#cfd3de"/></linearGradient></defs>
<path d="M5.6 0.8 H17.4 L15.8 6 H4 Z" fill="#f4f5f8" stroke="#9a9ead" stroke-width="0.9"/>
<path d="M6.6 2.6 H15.6 M6.2 4.2 H15.2" stroke="#b4b8c6" stroke-width="0.9"/>
<path d="M0.8 9.6 L4 6 H15.8 L17.6 9.6 V15 L14.6 16.8 H0.8 Z" fill="url(#pg)" stroke="#9a9ead" stroke-width="0.9"/>
<path d="M0.8 9.6 H14.4 L17.6 6.4 M14.4 9.6 V16.6" stroke="#a9adbb" stroke-width="0.8" fill="none"/>
<path d="M1.4 14.4 H14" stroke="#b9bdca" stroke-width="1"/>
<rect x="9.6" y="11" width="1.2" height="1.8" fill="#4a4e5c"/></svg>
<span class="t" style="left:502.70px;top:596px;font-size:17px;line-height:23px;color:#222;letter-spacing:-0.727px;width:145.50px;overflow:hidden;">PDF3D</span>
<span class="t" style="left:653.80px;top:596px;font-size:17px;line-height:23px;color:#222;letter-spacing:-0.344px;">[PCB Document]</span>
<span class="t" style="left:965.60px;top:596px;font-size:17px;line-height:23px;color:#222;letter-spacing:-0.727px;">PDF3D</span>
<svg style="left:480.60px;top:626.00px" width="19" height="18" viewBox="0 0 19 18"><defs><linearGradient id="pg" x1="0" y1="0" x2="0" y2="1"><stop offset="0" stop-color="#fdfdfe"/><stop offset="1" stop-color="#cfd3de"/></linearGradient></defs>
<path d="M5.6 0.8 H17.4 L15.8 6 H4 Z" fill="#f4f5f8" stroke="#9a9ead" stroke-width="0.9"/>
<path d="M6.6 2.6 H15.6 M6.2 4.2 H15.2" stroke="#b4b8c6" stroke-width="0.9"/>
<path d="M0.8 9.6 L4 6 H15.8 L17.6 9.6 V15 L14.6 16.8 H0.8 Z" fill="url(#pg)" stroke="#9a9ead" stroke-width="0.9"/>
<path d="M0.8 9.6 H14.4 L17.6 6.4 M14.4 9.6 V16.6" stroke="#a9adbb" stroke-width="0.8" fill="none"/>
<path d="M1.4 14.4 H14" stroke="#b9bdca" stroke-width="1"/>
<rect x="9.6" y="11" width="1.2" height="1.8" fill="#4a4e5c"/></svg>
<span class="t" style="left:502.70px;top:623px;font-size:17px;line-height:23px;color:#222;letter-spacing:-0.554px;width:145.50px;overflow:hidden;">PCB Prints</span>
<span class="t" style="left:653.80px;top:623px;font-size:17px;line-height:23px;color:#222;letter-spacing:-0.344px;">[PCB Document]</span>
<span class="t" style="left:965.60px;top:623px;font-size:17px;line-height:23px;color:#222;letter-spacing:-0.554px;">PCB Prints</span>
<svg style="left:480.60px;top:652.40px" width="19" height="18" viewBox="0 0 19 18"><defs><linearGradient id="pg" x1="0" y1="0" x2="0" y2="1"><stop offset="0" stop-color="#fdfdfe"/><stop offset="1" stop-color="#cfd3de"/></linearGradient></defs>
<path d="M5.6 0.8 H17.4 L15.8 6 H4 Z" fill="#f4f5f8" stroke="#9a9ead" stroke-width="0.9"/>
<path d="M6.6 2.6 H15.6 M6.2 4.2 H15.2" stroke="#b4b8c6" stroke-width="0.9"/>
<path d="M0.8 9.6 L4 6 H15.8 L17.6 9.6 V15 L14.6 16.8 H0.8 Z" fill="url(#pg)" stroke="#9a9ead" stroke-width="0.9"/>
<path d="M0.8 9.6 H14.4 L17.6 6.4 M14.4 9.6 V16.6" stroke="#a9adbb" stroke-width="0.8" fill="none"/>
<path d="M1.4 14.4 H14" stroke="#b9bdca" stroke-width="1"/>
<rect x="9.6" y="11" width="1.2" height="1.8" fill="#4a4e5c"/></svg>
<span class="t" style="left:502.70px;top:649px;font-size:17px;line-height:23px;color:#222;letter-spacing:-0.391px;width:145.50px;overflow:hidden;">PCB 3D Print</span>
<span class="t" style="left:653.80px;top:649px;font-size:17px;line-height:23px;color:#222;letter-spacing:-0.344px;">[PCB Document]</span>
<span class="t" style="left:965.60px;top:649px;font-size:17px;line-height:23px;color:#222;letter-spacing:-0.391px;">PCB 3D Print</span>
<div style="left:1296.80px;top:651.90px;width:19.80px;height:19.80px;background:#b9b9b9;border-radius:50%;"></div>
<svg style="left:480.60px;top:678.80px" width="19" height="18" viewBox="0 0 19 18"><defs><linearGradient id="pg" x1="0" y1="0" x2="0" y2="1"><stop offset="0" stop-color="#fdfdfe"/><stop offset="1" stop-color="#cfd3de"/></linearGradient></defs>
<path d="M5.6 0.8 H17.4 L15.8 6 H4 Z" fill="#f4f5f8" stroke="#9a9ead" stroke-width="0.9"/>
<path d="M6.6 2.6 H15.6 M6.2 4.2 H15.2" stroke="#b4b8c6" stroke-width="0.9"/>
<path d="M0.8 9.6 L4 6 H15.8 L17.6 9.6 V15 L14.6 16.8 H0.8 Z" fill="url(#pg)" stroke="#9a9ead" stroke-width="0.9"/>
<path d="M0.8 9.6 H14.4 L17.6 6.4 M14.4 9.6 V16.6" stroke="#a9adbb" stroke-width="0.8" fill="none"/>
<path d="M1.4 14.4 H14" stroke="#b9bdca" stroke-width="1"/>
<rect x="9.6" y="11" width="1.2" height="1.8" fill="#4a4e5c"/></svg>
<span class="t" style="left:502.70px;top:676px;font-size:17px;line-height:23px;color:#222;letter-spacing:-0.091px;width:145.50px;overflow:hidden;">Draftsman</span>
<span class="t" style="left:653.80px;top:676px;font-size:17px;line-height:23px;color:#e0666c;letter-spacing:-0.149px;">All Draftsman Documents</span>
<span class="t" style="left:965.60px;top:676px;font-size:17px;line-height:23px;color:#222;letter-spacing:-0.091px;">Draftsman</span>
<svg style="left:483.30px;top:708.20px" width="13" height="12" viewBox="0 0 13 12"><rect x="1.2" y="1.2" width="10.6" height="9.2" fill="#fff" stroke="#5b8dd6" stroke-width="1.4"/>
<path d="M3 5.8 H7 M6 3.7 L9.2 5.8 L6 7.9 Z" stroke="#3f74c8" stroke-width="1.4" fill="#3f74c8" stroke-linejoin="round"/></svg>
<span class="t" style="left:502.70px;top:702px;font-size:17px;line-height:23px;color:#222;letter-spacing:-0.121px;width:145.50px;overflow:hidden;">[Add New Documentation Output]</span>
<div style="left:475.00px;top:727.60px;width:868.00px;height:26.20px;background:#efefef;"></div>
<svg style="left:439.80px;top:737.00px" width="8" height="8" viewBox="0 0 8 8"><path d="M6.8 0.4 L6.8 6.8 L0.4 6.8 Z" fill="#222"/></svg>
<svg style="left:455.60px;top:732.00px" width="21" height="18" viewBox="0 0 21 18"><path d="M0.6 13.6 V1.8 Q0.6 0.6 1.8 0.6 H6 L7.6 2.6 H15.8 Q16.8 2.6 16.8 3.6 V13.6 Z" fill="#f3dc9c" stroke="#cbb070" stroke-width="1"/>
<rect x="1.4" y="4" width="14.8" height="9" fill="#f7e4ad"/>
<rect x="9.1" y="7.8" width="10.4" height="8.8" fill="#fff" stroke="#5b8dd6" stroke-width="1.3"/>
<path d="M11.2 12.2 H15 M13.8 10.2 L16.4 12.2 L13.8 14.2 Z" stroke="#3f74c8" stroke-width="1.3" fill="#3f74c8" stroke-linejoin="round"/></svg>
<span class="t" style="left:478.70px;top:728px;font-size:17px;line-height:23px;color:#222;letter-spacing:-0.110px;width:169.50px;overflow:hidden;">Assembly Outputs</span>
<svg style="left:479.80px;top:759.60px" width="20" height="15" viewBox="0 0 20 15"><path d="M0.5 0.8 H19 V14.4 H8.5 V12.8 H0.5 Z" fill="#0e8457" stroke="#0a6b45" stroke-width="0.8"/>
<rect x="10.6" y="2.2" width="6" height="5.6" fill="#d4ebe0" stroke="#5fb590" stroke-width="0.8"/>
<rect x="2.2" y="2.6" width="2.2" height="1.3" fill="#9fd8bd"/><rect x="5.4" y="2.6" width="3.4" height="1.3" fill="#6cc39d"/>
<rect x="2.2" y="5.3" width="2.2" height="1.3" fill="#9fd8bd"/><rect x="5.4" y="5.3" width="3.4" height="1.3" fill="#6cc39d"/>
<rect x="2.2" y="8" width="2.2" height="1.3" fill="#9fd8bd"/><rect x="5.4" y="8" width="3.4" height="1.3" fill="#6cc39d"/>
<rect x="2.2" y="10.6" width="2.2" height="1.3" fill="#9fd8bd"/><rect x="5.4" y="10.6" width="3.4" height="1.3" fill="#6cc39d"/>
<rect x="10" y="10.6" width="1.5" height="2.6" fill="#c9ecd9"/><rect x="12.4" y="10.6" width="1.5" height="2.6" fill="#c9ecd9"/><rect x="14.8" y="10.6" width="1.5" height="2.6" fill="#c9ecd9"/><rect x="17" y="10.6" width="1.2" height="2.6" fill="#c9ecd9"/></svg>
<span class="t" style="left:502.70px;top:755px;font-size:17px;line-height:23px;color:#222;letter-spacing:-0.347px;width:145.50px;overflow:hidden;">Generates pick and place files</span>
<span class="t" style="left:653.80px;top:755px;font-size:17px;line-height:23px;color:#222;letter-spacing:-0.344px;">[PCB Document]</span>
<span class="t" style="left:965.60px;top:755px;font-size:17px;line-height:23px;color:#222;letter-spacing:-0.398px;">Generates pick and place files</span>
<div style="left:1296.80px;top:757.50px;width:19.80px;height:19.80px;background:#b9b9b9;border-radius:50%;"></div>
<svg style="left:479.80px;top:786.00px" width="20" height="15" viewBox="0 0 20 15"><path d="M0.5 0.8 H19 V14.4 H8.5 V12.8 H0.5 Z" fill="#0e8457" stroke="#0a6b45" stroke-width="0.8"/>
<rect x="10.6" y="2.2" width="6" height="5.6" fill="#d4ebe0" stroke="#5fb590" stroke-width="0.8"/>
<rect x="2.2" y="2.6" width="2.2" height="1.3" fill="#9fd8bd"/><rect x="5.4" y="2.6" width="3.4" height="1.3" fill="#6cc39d"/>
<rect x="2.2" y="5.3" width="2.2" height="1.3" fill="#9fd8bd"/><rect x="5.4" y="5.3" width="3.4" height="1.3" fill="#6cc39d"/>
<rect x="2.2" y="8" width="2.2" height="1.3" fill="#9fd8bd"/><rect x="5.4" y="8" width="3.4" height="1.3" fill="#6cc39d"/>
<rect x="2.2" y="10.6" width="2.2" height="1.3" fill="#9fd8bd"/><rect x="5.4" y="10.6" width="3.4" height="1.3" fill="#6cc39d"/>
<rect x="10" y="10.6" width="1.5" height="2.6" fill="#c9ecd9"/><rect x="12.4" y="10.6" width="1.5" height="2.6" fill="#c9ecd9"/><rect x="14.8" y="10.6" width="1.5" height="2.6" fill="#c9ecd9"/><rect x="17" y="10.6" width="1.2" height="2.6" fill="#c9ecd9"/></svg>
<span class="t" style="left:502.70px;top:781px;font-size:17px;line-height:23px;color:#222;letter-spacing:-0.294px;width:145.50px;overflow:hidden;">Test Point Report</span>
<span class="t" style="left:653.80px;top:781px;font-size:17px;line-height:23px;color:#222;letter-spacing:-0.344px;">[PCB Document]</span>
<span class="t" style="left:965.60px;top:781px;font-size:17px;line-height:23px;color:#222;letter-spacing:-0.294px;">Test Point Report</span>
<div style="left:1296.80px;top:783.90px;width:19.80px;height:19.80px;background:#b9b9b9;border-radius:50%;"></div>
<svg style="left:480.60px;top:810.80px" width="19" height="18" viewBox="0 0 19 18"><defs><linearGradient id="pg" x1="0" y1="0" x2="0" y2="1"><stop offset="0" stop-color="#fdfdfe"/><stop offset="1" stop-color="#cfd3de"/></linearGradient></defs>
<path d="M5.6 0.8 H17.4 L15.8 6 H4 Z" fill="#f4f5f8" stroke="#9a9ead" stroke-width="0.9"/>
<path d="M6.6 2.6 H15.6 M6.2 4.2 H15.2" stroke="#b4b8c6" stroke-width="0.9"/>
<path d="M0.8 9.6 L4 6 H15.8 L17.6 9.6 V15 L14.6 16.8 H0.8 Z" fill="url(#pg)" stroke="#9a9ead" stroke-width="0.9"/>
<path d="M0.8 9.6 H14.4 L17.6 6.4 M14.4 9.6 V16.6" stroke="#a9adbb" stroke-width="0.8" fill="none"/>
<path d="M1.4 14.4 H14" stroke="#b9bdca" stroke-width="1"/>
<rect x="9.6" y="11" width="1.2" height="1.8" fill="#4a4e5c"/></svg>
<span class="t" style="left:502.70px;top:808px;font-size:17px;line-height:23px;color:#222;letter-spacing:-0.345px;width:145.50px;overflow:hidden;">Assembly Drawings</span>
<span class="t" style="left:653.80px;top:808px;font-size:17px;line-height:23px;color:#222;letter-spacing:-0.344px;">[PCB Document]</span>
<span class="t" style="left:965.60px;top:808px;font-size:17px;line-height:23px;color:#222;letter-spacing:-0.345px;">Assembly Drawings</span>
<svg style="left:483.30px;top:840.20px" width="13" height="12" viewBox="0 0 13 12"><rect x="1.2" y="1.2" width="10.6" height="9.2" fill="#fff" stroke="#5b8dd6" stroke-width="1.4"/>
<path d="M3 5.8 H7 M6 3.7 L9.2 5.8 L6 7.9 Z" stroke="#3f74c8" stroke-width="1.4" fill="#3f74c8" stroke-linejoin="round"/></svg>
<span class="t" style="left:502.70px;top:834px;font-size:17px;line-height:23px;color:#222;letter-spacing:-0.186px;width:145.50px;overflow:hidden;">[Add New Assembly Output]</span>
<div style="left:475.00px;top:859.60px;width:868.00px;height:26.20px;background:#efefef;"></div>
<svg style="left:439.80px;top:869.00px" width="8" height="8" viewBox="0 0 8 8"><path d="M6.8 0.4 L6.8 6.8 L0.4 6.8 Z" fill="#222"/></svg>
<svg style="left:455.60px;top:864.00px" width="21" height="18" viewBox="0 0 21 18"><path d="M0.6 13.6 V1.8 Q0.6 0.6 1.8 0.6 H6 L7.6 2.6 H15.8 Q16.8 2.6 16.8 3.6 V13.6 Z" fill="#f3dc9c" stroke="#cbb070" stroke-width="1"/>
<rect x="1.4" y="4" width="14.8" height="9" fill="#f7e4ad"/>
<rect x="9.1" y="7.8" width="10.4" height="8.8" fill="#fff" stroke="#5b8dd6" stroke-width="1.3"/>
<path d="M11.2 12.2 H15 M13.8 10.2 L16.4 12.2 L13.8 14.2 Z" stroke="#3f74c8" stroke-width="1.3" fill="#3f74c8" stroke-linejoin="round"/></svg>
<span class="t" style="left:478.70px;top:860px;font-size:17px;line-height:23px;color:#222;letter-spacing:-0.087px;width:169.50px;overflow:hidden;">Fabrication Outputs</span>
<svg style="left:480.60px;top:890.00px" width="19" height="18" viewBox="0 0 19 18"><defs><linearGradient id="pg" x1="0" y1="0" x2="0" y2="1"><stop offset="0" stop-color="#fdfdfe"/><stop offset="1" stop-color="#cfd3de"/></linearGradient></defs>
<path d="M5.6 0.8 H17.4 L15.8 6 H4 Z" fill="#f4f5f8" stroke="#9a9ead" stroke-width="0.9"/>
<path d="M6.6 2.6 H15.6 M6.2 4.2 H15.2" stroke="#b4b8c6" stroke-width="0.9"/>
<path d="M0.8 9.6 L4 6 H15.8 L17.6 9.6 V15 L14.6 16.8 H0.8 Z" fill="url(#pg)" stroke="#9a9ead" stroke-width="0.9"/>
<path d="M0.8 9.6 H14.4 L17.6 6.4 M14.4 9.6 V16.6" stroke="#a9adbb" stroke-width="0.8" fill="none"/>
<path d="M1.4 14.4 H14" stroke="#b9bdca" stroke-width="1"/>
<rect x="9.6" y="11" width="1.2" height="1.8" fill="#4a4e5c"/></svg>
<span class="t" style="left:502.70px;top:887px;font-size:17px;line-height:23px;color:#222;letter-spacing:-0.398px;width:145.50px;overflow:hidden;">Report Board Stack</span>
<span class="t" style="left:653.80px;top:887px;font-size:17px;line-height:23px;color:#222;letter-spacing:-0.344px;">[PCB Document]</span>
<span class="t" style="left:965.60px;top:887px;font-size:17px;line-height:23px;color:#222;letter-spacing:-0.398px;">Report Board Stack</span>
<div style="left:499.20px;top:912.20px;width:843.80px;height:26.50px;background:#6a9aca;"></div>
<div style="left:649.60px;top:912.40px;width:311.60px;height:26.00px;border:1px dotted #3d5f86;box-sizing:border-box;"></div>
<svg style="left:479.80px;top:918.00px" width="20" height="15" viewBox="0 0 20 15"><path d="M0.5 0.8 H19 V14.4 H8.5 V12.8 H0.5 Z" fill="#0e8457" stroke="#0a6b45" stroke-width="0.8"/>
<rect x="10.6" y="2.2" width="6" height="5.6" fill="#d4ebe0" stroke="#5fb590" stroke-width="0.8"/>
<rect x="2.2" y="2.6" width="2.2" height="1.3" fill="#9fd8bd"/><rect x="5.4" y="2.6" width="3.4" height="1.3" fill="#6cc39d"/>
<rect x="2.2" y="5.3" width="2.2" height="1.3" fill="#9fd8bd"/><rect x="5.4" y="5.3" width="3.4" height="1.3" fill="#6cc39d"/>
<rect x="2.2" y="8" width="2.2" height="1.3" fill="#9fd8bd"/><rect x="5.4" y="8" width="3.4" height="1.3" fill="#6cc39d"/>
<rect x="2.2" y="10.6" width="2.2" height="1.3" fill="#9fd8bd"/><rect x="5.4" y="10.6" width="3.4" height="1.3" fill="#6cc39d"/>
<rect x="10" y="10.6" width="1.5" height="2.6" fill="#c9ecd9"/><rect x="12.4" y="10.6" width="1.5" height="2.6" fill="#c9ecd9"/><rect x="14.8" y="10.6" width="1.5" height="2.6" fill="#c9ecd9"/><rect x="17" y="10.6" width="1.2" height="2.6" fill="#c9ecd9"/></svg>
<span class="t" style="left:502.70px;top:913px;font-size:17px;line-height:23px;color:#ffffff;letter-spacing:-0.569px;width:145.50px;overflow:hidden;">Gerber Files</span>
<span class="t" style="left:653.80px;top:913px;font-size:17px;line-height:23px;color:#ffffff;letter-spacing:-0.344px;">[PCB Document]</span>
<span class="t" style="left:965.60px;top:913px;font-size:17px;line-height:23px;color:#ffffff;letter-spacing:-0.569px;">Gerber Files</span>
<svg style="left:479.80px;top:944.40px" width="20" height="15" viewBox="0 0 20 15"><path d="M0.5 0.8 H19 V14.4 H8.5 V12.8 H0.5 Z" fill="#0e8457" stroke="#0a6b45" stroke-width="0.8"/>
<rect x="10.6" y="2.2" width="6" height="5.6" fill="#d4ebe0" stroke="#5fb590" stroke-width="0.8"/>
<rect x="2.2" y="2.6" width="2.2" height="1.3" fill="#9fd8bd"/><rect x="5.4" y="2.6" width="3.4" height="1.3" fill="#6cc39d"/>
<rect x="2.2" y="5.3" width="2.2" height="1.3" fill="#9fd8bd"/><rect x="5.4" y="5.3" width="3.4" height="1.3" fill="#6cc39d"/>
<rect x="2.2" y="8" width="2.2" height="1.3" fill="#9fd8bd"/><rect x="5.4" y="8" width="3.4" height="1.3" fill="#6cc39d"/>
<rect x="2.2" y="10.6" width="2.2" height="1.3" fill="#9fd8bd"/><rect x="5.4" y="10.6" width="3.4" height="1.3" fill="#6cc39d"/>
<rect x="10" y="10.6" width="1.5" height="2.6" fill="#c9ecd9"/><rect x="12.4" y="10.6" width="1.5" height="2.6" fill="#c9ecd9"/><rect x="14.8" y="10.6" width="1.5" height="2.6" fill="#c9ecd9"/><rect x="17" y="10.6" width="1.2" height="2.6" fill="#c9ecd9"/></svg>
<span class="t" style="left:502.70px;top:940px;font-size:17px;line-height:23px;color:#222;letter-spacing:-0.455px;width:145.50px;overflow:hidden;">NC Drill Files</span>
<span class="t" style="left:653.80px;top:940px;font-size:17px;line-height:23px;color:#222;letter-spacing:-0.344px;">[PCB Document]</span>
<span class="t" style="left:965.60px;top:940px;font-size:17px;line-height:23px;color:#222;letter-spacing:-0.455px;">NC Drill Files</span>
<svg style="left:479.80px;top:970.80px" width="20" height="15" viewBox="0 0 20 15"><path d="M0.5 0.8 H19 V14.4 H8.5 V12.8 H0.5 Z" fill="#0e8457" stroke="#0a6b45" stroke-width="0.8"/>
<rect x="10.6" y="2.2" width="6" height="5.6" fill="#d4ebe0" stroke="#5fb590" stroke-width="0.8"/>
<rect x="2.2" y="2.6" width="2.2" height="1.3" fill="#9fd8bd"/><rect x="5.4" y="2.6" width="3.4" height="1.3" fill="#6cc39d"/>
<rect x="2.2" y="5.3" width="2.2" height="1.3" fill="#9fd8bd"/><rect x="5.4" y="5.3" width="3.4" height="1.3" fill="#6cc39d"/>
<rect x="2.2" y="8" width="2.2" height="1.3" fill="#9fd8bd"/><rect x="5.4" y="8" width="3.4" height="1.3" fill="#6cc39d"/>
<rect x="2.2" y="10.6" width="2.2" height="1.3" fill="#9fd8bd"/><rect x="5.4" y="10.6" width="3.4" height="1.3" fill="#6cc39d"/>
<rect x="10" y="10.6" width="1.5" height="2.6" fill="#c9ecd9"/><rect x="12.4" y="10.6" width="1.5" height="2.6" fill="#c9ecd9"/><rect x="14.8" y="10.6" width="1.5" height="2.6" fill="#c9ecd9"/><rect x="17" y="10.6" width="1.2" height="2.6" fill="#c9ecd9"/></svg>
<span class="t" style="left:502.70px;top:966px;font-size:17px;line-height:23px;color:#222;letter-spacing:-0.200px;width:145.50px;overflow:hidden;">钢网</span>
<span class="t" style="left:653.80px;top:966px;font-size:17px;line-height:23px;color:#222;letter-spacing:-0.344px;">[PCB Document]</span>
<span class="t" style="left:965.60px;top:966px;font-size:17px;line-height:23px;color:#222;letter-spacing:-0.569px;">Gerber Files</span>
<div style="left:1296.80px;top:968.70px;width:19.80px;height:19.80px;background:#b9b9b9;border-radius:50%;"></div>
<svg style="left:479.80px;top:997.20px" width="20" height="15" viewBox="0 0 20 15"><path d="M0.5 0.8 H19 V14.4 H8.5 V12.8 H0.5 Z" fill="#0e8457" stroke="#0a6b45" stroke-width="0.8"/>
<rect x="10.6" y="2.2" width="6" height="5.6" fill="#d4ebe0" stroke="#5fb590" stroke-width="0.8"/>
<rect x="2.2" y="2.6" width="2.2" height="1.3" fill="#9fd8bd"/><rect x="5.4" y="2.6" width="3.4" height="1.3" fill="#6cc39d"/>
<rect x="2.2" y="5.3" width="2.2" height="1.3" fill="#9fd8bd"/><rect x="5.4" y="5.3" width="3.4" height="1.3" fill="#6cc39d"/>
<rect x="2.2" y="8" width="2.2" height="1.3" fill="#9fd8bd"/><rect x="5.4" y="8" width="3.4" height="1.3" fill="#6cc39d"/>
<rect x="2.2" y="10.6" width="2.2" height="1.3" fill="#9fd8bd"/><rect x="5.4" y="10.6" width="3.4" height="1.3" fill="#6cc39d"/>
<rect x="10" y="10.6" width="1.5" height="2.6" fill="#c9ecd9"/><rect x="12.4" y="10.6" width="1.5" height="2.6" fill="#c9ecd9"/><rect x="14.8" y="10.6" width="1.5" height="2.6" fill="#c9ecd9"/><rect x="17" y="10.6" width="1.2" height="2.6" fill="#c9ecd9"/></svg>
<span class="t" style="left:502.70px;top:992px;font-size:17px;line-height:23px;color:#222;letter-spacing:-0.200px;width:145.50px;overflow:hidden;">钢网</span>
<span class="t" style="left:653.80px;top:992px;font-size:17px;line-height:23px;color:#222;letter-spacing:-0.344px;">[PCB Document]</span>
<span class="t" style="left:965.60px;top:992px;font-size:17px;line-height:23px;color:#222;letter-spacing:-0.455px;">NC Drill Files</span>
<div style="left:1296.80px;top:995.10px;width:19.80px;height:19.80px;background:#b9b9b9;border-radius:50%;"></div>
<svg style="left:483.30px;top:1025.00px" width="13" height="12" viewBox="0 0 13 12"><rect x="1.2" y="1.2" width="10.6" height="9.2" fill="#fff" stroke="#5b8dd6" stroke-width="1.4"/>
<path d="M3 5.8 H7 M6 3.7 L9.2 5.8 L6 7.9 Z" stroke="#3f74c8" stroke-width="1.4" fill="#3f74c8" stroke-linejoin="round"/></svg>
<span class="t" style="left:502.70px;top:1019px;font-size:17px;line-height:23px;color:#222;letter-spacing:-0.182px;width:145.50px;overflow:hidden;">[Add New Fabrication Output]</span>
<div style="left:475.00px;top:1044.40px;width:868.00px;height:26.20px;background:#efefef;"></div>
<svg style="left:439.80px;top:1053.80px" width="8" height="8" viewBox="0 0 8 8"><path d="M6.8 0.4 L6.8 6.8 L0.4 6.8 Z" fill="#222"/></svg>
<svg style="left:455.60px;top:1048.80px" width="21" height="18" viewBox="0 0 21 18"><path d="M0.6 13.6 V1.8 Q0.6 0.6 1.8 0.6 H6 L7.6 2.6 H15.8 Q16.8 2.6 16.8 3.6 V13.6 Z" fill="#f3dc9c" stroke="#cbb070" stroke-width="1"/>
<rect x="1.4" y="4" width="14.8" height="9" fill="#f7e4ad"/>
<rect x="9.1" y="7.8" width="10.4" height="8.8" fill="#fff" stroke="#5b8dd6" stroke-width="1.3"/>
<path d="M11.2 12.2 H15 M13.8 10.2 L16.4 12.2 L13.8 14.2 Z" stroke="#3f74c8" stroke-width="1.3" fill="#3f74c8" stroke-linejoin="round"/></svg>
<span class="t" style="left:478.70px;top:1045px;font-size:17px;line-height:23px;color:#222;letter-spacing:0.030px;width:169.50px;overflow:hidden;">Report Outputs</span>
<svg style="left:479.80px;top:1073.80px" width="20" height="19" viewBox="0 0 20 19"><rect x="0.6" y="5.8" width="15.8" height="12" fill="#f4dc84" stroke="#c4a85a" stroke-width="1"/>
<rect x="1.6" y="6.8" width="6" height="10" fill="#f9e9a4"/>
<path d="M8.6 13.4 H16 " stroke="#c4a85a" stroke-width="0.9"/>
<rect x="10" y="0.6" width="8.6" height="12.8" fill="#e9edf5" stroke="#b0b8cc" stroke-width="1"/>
<path d="M11.8 3.1 H17 M11.8 5.4 H17 M11.8 7.7 H17 M11.8 10 H17" stroke="#8f98b2" stroke-width="0.8"/></svg>
<span class="t" style="left:502.70px;top:1072px;font-size:17px;line-height:23px;color:#222;letter-spacing:-1.299px;width:145.50px;overflow:hidden;">PCBA</span>
<span class="t" style="left:653.80px;top:1072px;font-size:17px;line-height:23px;color:#222;letter-spacing:-0.184px;">[Project]</span>
<span class="t" style="left:965.60px;top:1072px;font-size:17px;line-height:23px;color:#222;letter-spacing:-0.169px;">Bill of Materials</span>
<div style="left:1296.80px;top:1074.30px;width:19.80px;height:19.80px;background:#b9b9b9;border-radius:50%;"></div>
<svg style="left:479.80px;top:1100.20px" width="20" height="19" viewBox="0 0 20 19"><rect x="0.6" y="5.8" width="15.8" height="12" fill="#f4dc84" stroke="#c4a85a" stroke-width="1"/>
<rect x="1.6" y="6.8" width="6" height="10" fill="#f9e9a4"/>
<path d="M8.6 13.4 H16 " stroke="#c4a85a" stroke-width="0.9"/>
<rect x="10" y="0.6" width="8.6" height="12.8" fill="#e9edf5" stroke="#b0b8cc" stroke-width="1"/>
<path d="M11.8 3.1 H17 M11.8 5.4 H17 M11.8 7.7 H17 M11.8 10 H17" stroke="#8f98b2" stroke-width="0.8"/></svg>
<span class="t" style="left:502.70px;top:1098px;font-size:17px;line-height:23px;color:#222;letter-spacing:-0.200px;width:145.50px;overflow:hidden;">采购</span>
<span class="t" style="left:653.80px;top:1098px;font-size:17px;line-height:23px;color:#222;letter-spacing:-0.184px;">[Project]</span>
<span class="t" style="left:965.60px;top:1098px;font-size:17px;line-height:23px;color:#222;letter-spacing:-0.169px;">Bill of Materials</span>
<div style="left:1296.80px;top:1100.70px;width:19.80px;height:19.80px;background:#b9b9b9;border-radius:50%;"></div>
<svg style="left:483.30px;top:1130.60px" width="13" height="12" viewBox="0 0 13 12"><rect x="1.2" y="1.2" width="10.6" height="9.2" fill="#fff" stroke="#5b8dd6" stroke-width="1.4"/>
<path d="M3 5.8 H7 M6 3.7 L9.2 5.8 L6 7.9 Z" stroke="#3f74c8" stroke-width="1.4" fill="#3f74c8" stroke-linejoin="round"/></svg>
<span class="t" style="left:502.70px;top:1124px;font-size:17px;line-height:23px;color:#222;letter-spacing:-0.140px;width:145.50px;overflow:hidden;">[Add New Report Output]</span>
<div style="left:475.00px;top:1150.00px;width:868.00px;height:26.20px;background:#efefef;"></div>
<svg style="left:439.80px;top:1159.40px" width="8" height="8" viewBox="0 0 8 8"><path d="M6.8 0.4 L6.8 6.8 L0.4 6.8 Z" fill="#222"/></svg>
<svg style="left:455.60px;top:1154.40px" width="21" height="18" viewBox="0 0 21 18"><path d="M0.6 13.6 V1.8 Q0.6 0.6 1.8 0.6 H6 L7.6 2.6 H15.8 Q16.8 2.6 16.8 3.6 V13.6 Z" fill="#f3dc9c" stroke="#cbb070" stroke-width="1"/>
<rect x="1.4" y="4" width="14.8" height="9" fill="#f7e4ad"/>
<rect x="9.1" y="7.8" width="10.4" height="8.8" fill="#fff" stroke="#5b8dd6" stroke-width="1.3"/>
<path d="M11.2 12.2 H15 M13.8 10.2 L16.4 12.2 L13.8 14.2 Z" stroke="#3f74c8" stroke-width="1.3" fill="#3f74c8" stroke-linejoin="round"/></svg>
<span class="t" style="left:478.70px;top:1151px;font-size:17px;line-height:23px;color:#222;letter-spacing:0.074px;width:169.50px;overflow:hidden;">Validation Outputs</span>
<svg style="left:480.60px;top:1180.40px" width="19" height="18" viewBox="0 0 19 18"><defs><linearGradient id="pg" x1="0" y1="0" x2="0" y2="1"><stop offset="0" stop-color="#fdfdfe"/><stop offset="1" stop-color="#cfd3de"/></linearGradient></defs>
<path d="M5.6 0.8 H17.4 L15.8 6 H4 Z" fill="#f4f5f8" stroke="#9a9ead" stroke-width="0.9"/>
<path d="M6.6 2.6 H15.6 M6.2 4.2 H15.2" stroke="#b4b8c6" stroke-width="0.9"/>
<path d="M0.8 9.6 L4 6 H15.8 L17.6 9.6 V15 L14.6 16.8 H0.8 Z" fill="url(#pg)" stroke="#9a9ead" stroke-width="0.9"/>
<path d="M0.8 9.6 H14.4 L17.6 6.4 M14.4 9.6 V16.6" stroke="#a9adbb" stroke-width="0.8" fill="none"/>
<path d="M1.4 14.4 H14" stroke="#b9bdca" stroke-width="1"/>
<rect x="9.6" y="11" width="1.2" height="1.8" fill="#4a4e5c"/></svg>
<span class="t" style="left:502.70px;top:1177px;font-size:17px;line-height:23px;color:#222;letter-spacing:-0.590px;width:145.50px;overflow:hidden;">Design Rules Check</span>
<span class="t" style="left:653.80px;top:1177px;font-size:17px;line-height:23px;color:#222;letter-spacing:-0.344px;">[PCB Document]</span>
<span class="t" style="left:965.60px;top:1177px;font-size:17px;line-height:23px;color:#222;letter-spacing:-0.590px;">Design Rules Check</span>
<div style="left:1296.80px;top:1179.90px;width:19.80px;height:19.80px;background:#b9b9b9;border-radius:50%;"></div>
<svg style="left:480.60px;top:1206.80px" width="19" height="18" viewBox="0 0 19 18"><defs><linearGradient id="pg" x1="0" y1="0" x2="0" y2="1"><stop offset="0" stop-color="#fdfdfe"/><stop offset="1" stop-color="#cfd3de"/></linearGradient></defs>
<path d="M5.6 0.8 H17.4 L15.8 6 H4 Z" fill="#f4f5f8" stroke="#9a9ead" stroke-width="0.9"/>
<path d="M6.6 2.6 H15.6 M6.2 4.2 H15.2" stroke="#b4b8c6" stroke-width="0.9"/>
<path d="M0.8 9.6 L4 6 H15.8 L17.6 9.6 V15 L14.6 16.8 H0.8 Z" fill="url(#pg)" stroke="#9a9ead" stroke-width="0.9"/>
<path d="M0.8 9.6 H14.4 L17.6 6.4 M14.4 9.6 V16.6" stroke="#a9adbb" stroke-width="0.8" fill="none"/>
<path d="M1.4 14.4 H14" stroke="#b9bdca" stroke-width="1"/>
<rect x="9.6" y="11" width="1.2" height="1.8" fill="#4a4e5c"/></svg>
<span class="t" style="left:502.70px;top:1204px;font-size:17px;line-height:23px;color:#222;letter-spacing:-0.572px;width:145.50px;overflow:hidden;">Electrical Rules Check</span>
<span class="t" style="left:653.80px;top:1204px;font-size:17px;line-height:23px;color:#222;letter-spacing:-0.184px;">[Project]</span>
<span class="t" style="left:965.60px;top:1204px;font-size:17px;line-height:23px;color:#222;letter-spacing:-0.653px;">Electrical Rules Check</span>
<div style="left:1296.80px;top:1206.30px;width:19.80px;height:19.80px;background:#b9b9b9;border-radius:50%;"></div>
<svg style="left:483.30px;top:1236.20px" width="13" height="12" viewBox="0 0 13 12"><rect x="1.2" y="1.2" width="10.6" height="9.2" fill="#fff" stroke="#5b8dd6" stroke-width="1.4"/>
<path d="M3 5.8 H7 M6 3.7 L9.2 5.8 L6 7.9 Z" stroke="#3f74c8" stroke-width="1.4" fill="#3f74c8" stroke-linejoin="round"/></svg>
<span class="t" style="left:502.70px;top:1230px;font-size:17px;line-height:23px;color:#222;letter-spacing:0.028px;width:145.50px;overflow:hidden;">[Add New Validation Output]</span>
<div style="left:475.00px;top:1255.60px;width:868.00px;height:26.20px;background:#efefef;"></div>
<svg style="left:439.80px;top:1265.00px" width="8" height="8" viewBox="0 0 8 8"><path d="M6.8 0.4 L6.8 6.8 L0.4 6.8 Z" fill="#222"/></svg>
<svg style="left:455.60px;top:1260.00px" width="21" height="18" viewBox="0 0 21 18"><path d="M0.6 13.6 V1.8 Q0.6 0.6 1.8 0.6 H6 L7.6 2.6 H15.8 Q16.8 2.6 16.8 3.6 V13.6 Z" fill="#f3dc9c" stroke="#cbb070" stroke-width="1"/>
<rect x="1.4" y="4" width="14.8" height="9" fill="#f7e4ad"/>
<rect x="9.1" y="7.8" width="10.4" height="8.8" fill="#fff" stroke="#5b8dd6" stroke-width="1.3"/>
<path d="M11.2 12.2 H15 M13.8 10.2 L16.4 12.2 L13.8 14.2 Z" stroke="#3f74c8" stroke-width="1.3" fill="#3f74c8" stroke-linejoin="round"/></svg>
<span class="t" style="left:478.70px;top:1256px;font-size:17px;line-height:23px;color:#222;letter-spacing:0.008px;width:169.50px;overflow:hidden;">Export Outputs</span>
<svg style="left:479.80px;top:1287.60px" width="20" height="15" viewBox="0 0 20 15"><path d="M0.5 0.8 H19 V14.4 H8.5 V12.8 H0.5 Z" fill="#0e8457" stroke="#0a6b45" stroke-width="0.8"/>
<rect x="10.6" y="2.2" width="6" height="5.6" fill="#d4ebe0" stroke="#5fb590" stroke-width="0.8"/>
<rect x="2.2" y="2.6" width="2.2" height="1.3" fill="#9fd8bd"/><rect x="5.4" y="2.6" width="3.4" height="1.3" fill="#6cc39d"/>
<rect x="2.2" y="5.3" width="2.2" height="1.3" fill="#9fd8bd"/><rect x="5.4" y="5.3" width="3.4" height="1.3" fill="#6cc39d"/>
<rect x="2.2" y="8" width="2.2" height="1.3" fill="#9fd8bd"/><rect x="5.4" y="8" width="3.4" height="1.3" fill="#6cc39d"/>
<rect x="2.2" y="10.6" width="2.2" height="1.3" fill="#9fd8bd"/><rect x="5.4" y="10.6" width="3.4" height="1.3" fill="#6cc39d"/>
<rect x="10" y="10.6" width="1.5" height="2.6" fill="#c9ecd9"/><rect x="12.4" y="10.6" width="1.5" height="2.6" fill="#c9ecd9"/><rect x="14.8" y="10.6" width="1.5" height="2.6" fill="#c9ecd9"/><rect x="17" y="10.6" width="1.2" height="2.6" fill="#c9ecd9"/></svg>
<span class="t" style="left:502.70px;top:1283px;font-size:17px;line-height:23px;color:#222;letter-spacing:-0.142px;width:145.50px;overflow:hidden;">AutoCAD dwg/dxf File PCB</span>
<span class="t" style="left:653.80px;top:1283px;font-size:17px;line-height:23px;color:#222;letter-spacing:-0.344px;">[PCB Document]</span>
<span class="t" style="left:965.60px;top:1283px;font-size:17px;line-height:23px;color:#222;letter-spacing:-0.349px;">AutoCAD dwg/dxf File PCB</span>
<div style="left:1296.80px;top:1285.50px;width:19.80px;height:19.80px;background:#b9b9b9;border-radius:50%;"></div>
<svg style="left:479.80px;top:1314.00px" width="20" height="15" viewBox="0 0 20 15"><path d="M0.5 0.8 H19 V14.4 H8.5 V12.8 H0.5 Z" fill="#0e8457" stroke="#0a6b45" stroke-width="0.8"/>
<rect x="10.6" y="2.2" width="6" height="5.6" fill="#d4ebe0" stroke="#5fb590" stroke-width="0.8"/>
<rect x="2.2" y="2.6" width="2.2" height="1.3" fill="#9fd8bd"/><rect x="5.4" y="2.6" width="3.4" height="1.3" fill="#6cc39d"/>
<rect x="2.2" y="5.3" width="2.2" height="1.3" fill="#9fd8bd"/><rect x="5.4" y="5.3" width="3.4" height="1.3" fill="#6cc39d"/>
<rect x="2.2" y="8" width="2.2" height="1.3" fill="#9fd8bd"/><rect x="5.4" y="8" width="3.4" height="1.3" fill="#6cc39d"/>
<rect x="2.2" y="10.6" width="2.2" height="1.3" fill="#9fd8bd"/><rect x="5.4" y="10.6" width="3.4" height="1.3" fill="#6cc39d"/>
<rect x="10" y="10.6" width="1.5" height="2.6" fill="#c9ecd9"/><rect x="12.4" y="10.6" width="1.5" height="2.6" fill="#c9ecd9"/><rect x="14.8" y="10.6" width="1.5" height="2.6" fill="#c9ecd9"/><rect x="17" y="10.6" width="1.2" height="2.6" fill="#c9ecd9"/></svg>
<span class="t" style="left:502.70px;top:1309px;font-size:17px;line-height:23px;color:#222;letter-spacing:-1.061px;width:145.50px;overflow:hidden;">Export STEP</span>
<span class="t" style="left:653.80px;top:1309px;font-size:17px;line-height:23px;color:#222;letter-spacing:-0.344px;">[PCB Document]</span>
<span class="t" style="left:965.60px;top:1309px;font-size:17px;line-height:23px;color:#222;letter-spacing:-1.061px;">Export STEP</span>
<div style="left:1296.80px;top:1311.90px;width:19.80px;height:19.80px;background:#b9b9b9;border-radius:50%;"></div>
<svg style="left:483.30px;top:1341.80px" width="13" height="12" viewBox="0 0 13 12"><rect x="1.2" y="1.2" width="10.6" height="9.2" fill="#fff" stroke="#5b8dd6" stroke-width="1.4"/>
<path d="M3 5.8 H7 M6 3.7 L9.2 5.8 L6 7.9 Z" stroke="#3f74c8" stroke-width="1.4" fill="#3f74c8" stroke-linejoin="round"/></svg>
<span class="t" style="left:502.70px;top:1336px;font-size:17px;line-height:23px;color:#222;letter-spacing:-0.177px;width:145.50px;overflow:hidden;">[Add New Export Output]</span>
<div style="left:475.00px;top:1361.20px;width:868.00px;height:26.20px;background:#efefef;"></div>
<svg style="left:439.80px;top:1370.60px" width="8" height="8" viewBox="0 0 8 8"><path d="M6.8 0.4 L6.8 6.8 L0.4 6.8 Z" fill="#222"/></svg>
<svg style="left:455.60px;top:1365.60px" width="21" height="18" viewBox="0 0 21 18"><path d="M0.6 13.6 V1.8 Q0.6 0.6 1.8 0.6 H6 L7.6 2.6 H15.8 Q16.8 2.6 16.8 3.6 V13.6 Z" fill="#f3dc9c" stroke="#cbb070" stroke-width="1"/>
<rect x="1.4" y="4" width="14.8" height="9" fill="#f7e4ad"/>
<rect x="9.1" y="7.8" width="10.4" height="8.8" fill="#fff" stroke="#5b8dd6" stroke-width="1.3"/>
<path d="M11.2 12.2 H15 M13.8 10.2 L16.4 12.2 L13.8 14.2 Z" stroke="#3f74c8" stroke-width="1.3" fill="#3f74c8" stroke-linejoin="round"/></svg>
<span class="t" style="left:478.70px;top:1362px;font-size:17px;line-height:23px;color:#222;letter-spacing:-0.368px;width:169.50px;overflow:hidden;">PostProcess Outputs</span>
<svg style="left:483.30px;top:1394.60px" width="13" height="12" viewBox="0 0 13 12"><rect x="1.2" y="1.2" width="10.6" height="9.2" fill="#fff" stroke="#5b8dd6" stroke-width="1.4"/>
<path d="M3 5.8 H7 M6 3.7 L9.2 5.8 L6 7.9 Z" stroke="#3f74c8" stroke-width="1.4" fill="#3f74c8" stroke-linejoin="round"/></svg>
<span class="t" style="left:502.70px;top:1388px;font-size:17px;line-height:23px;color:#222;letter-spacing:-0.279px;width:145.50px;overflow:hidden;">[Add New PostProcess Output]</span>
<div style="left:1419.20px;top:378.00px;width:915.60px;height:1622.00px;background:#f8f8f8;border:1px solid #bfbfbf;border-bottom:none;box-sizing:border-box;"></div>
<div style="left:1420.20px;top:379.00px;width:895.80px;height:28.00px;background:#e6e6e6;"></div>
<div style="left:1420.20px;top:407.00px;width:895.80px;height:1.00px;background:#bdbdbd;"></div>
<div style="left:1420.20px;top:408.00px;width:895.80px;height:28.00px;background:#e6e6e6;"></div>
<div style="left:1420.20px;top:436.00px;width:895.80px;height:1.00px;background:#bdbdbd;"></div>
<div style="left:2315.40px;top:384.00px;width:1.00px;height:19.00px;background:#bdbdbd;"></div>
<div style="left:2316.00px;top:437.00px;width:1.00px;height:1021.00px;background:#e6e6e6;"></div>
<span class="t" style="left:1794.35px;top:383px;font-size:17px;line-height:23px;color:#111;letter-spacing:-0.136px;font-weight:bold;">Output Containers</span>
<span class="t" style="left:1831.20px;top:411px;font-size:17px;line-height:23px;color:#222;letter-spacing:-0.058px;">Container</span>
<svg style="left:1425.90px;top:485.80px" width="52" height="52" viewBox="0 0 52 52"><defs><linearGradient id="pp" x1="0" y1="0" x2="0.6" y2="1"><stop offset="0" stop-color="#ffffff"/><stop offset="1" stop-color="#dcebf9"/></linearGradient>
<linearGradient id="mf" x1="0" y1="0" x2="0" y2="1"><stop offset="0" stop-color="#fbe0a0"/><stop offset="1" stop-color="#eeb964"/></linearGradient></defs>
<path d="M7.6 0.8 H36 L45 9.8 V47.4 H7.6 Z" fill="url(#pp)" stroke="#a8b0c8" stroke-width="1.2"/>
<path d="M36 0.8 V9.8 H45" fill="#ffffff" stroke="#a8b0c8" stroke-width="1.2"/>
<rect x="0.2" y="5.2" width="29.4" height="11.4" fill="#e2061c"/>
<text x="15.6" y="14.3" font-family="Liberation Sans,sans-serif" font-size="9.6" fill="#fff" text-anchor="middle" letter-spacing="1" stroke="#fff" stroke-width="0.25">PDF</text>
<path d="M23 17.5 C23.5 24 19 33 13.5 37.5 C10 40.5 8.8 37.5 12.5 35 C18 31.5 31 28.2 38.5 29.4 C41.5 30.2 40 32.4 36.5 31.6 C30.5 30 24.5 23.5 23 17.5 Z" fill="none" stroke="#e8384a" stroke-width="1.5"/>
<text x="21.6" y="42" font-family="Liberation Sans,sans-serif" font-size="9.8" font-weight="bold" fill="#0c0c0c" textLength="21.5" lengthAdjust="spacingAndGlyphs">Adobe</text>
<g transform="translate(33.6,38.2)"><path d="M0.6 12.6 V1.4 Q0.6 0.6 1.4 0.6 H6.2 L7.4 2.6 H16.4 V12.6 Z" fill="#f5cf7e" stroke="#b48a3a" stroke-width="1"/>
<rect x="1.4" y="3.6" width="14.4" height="8.4" fill="url(#mf)"/></g></svg>
<span class="t" style="left:1492.20px;top:445px;font-size:17px;line-height:23px;color:#111;letter-spacing:-0.837px;font-weight:bold;">SCH_PDF</span>
<span class="t" style="left:1522.70px;top:476px;font-size:17px;line-height:23px;color:#7d7d7d;letter-spacing:-0.546px;">Release management</span>
<span class="t" style="left:1522.70px;top:507px;font-size:17px;line-height:23px;color:#7d7d7d;letter-spacing:-0.384px;">Local Path</span>
<span class="t" style="left:1702.60px;top:476px;font-size:17px;line-height:23px;color:#222;letter-spacing:-0.166px;">Manually managed</span>
<span class="t" style="left:1702.40px;top:507px;font-size:17px;line-height:23px;color:#222;letter-spacing:-0.152px;">D:\DXP\DCDC Module\M3406-ADJ\Outputs\PDF_SCH\M3406-ADJ_Module</span>
<div style="left:1420.20px;top:586.05px;width:895.80px;height:1.00px;background:#e4e4e4;"></div>
<div style="left:1477.20px;top:587.05px;width:838.80px;height:149.00px;background:#6a9aca;"></div>
<svg style="left:1430.40px;top:642.45px" width="47" height="46" viewBox="0 0 47 46"><defs><linearGradient id="dg" x1="0" y1="0" x2="1" y2="1"><stop offset="0" stop-color="#ffffff"/><stop offset="0.5" stop-color="#f1f6fc"/><stop offset="1" stop-color="#d6e8f8"/></linearGradient>
<linearGradient id="mf" x1="0" y1="0" x2="0" y2="1"><stop offset="0" stop-color="#fbe0a0"/><stop offset="1" stop-color="#eeb964"/></linearGradient></defs>
<rect x="1" y="1" width="34.6" height="38.4" rx="1" fill="url(#dg)" stroke="#aab1c9" stroke-width="1.8"/>
<path d="M6.2 8 H30 M6.2 11.6 H30 M6.2 15.3 H30 M6.2 18.8 H30 M6.2 22.5 H30 M6.2 26.1 H30 M6.2 29.7 H30" stroke="#a9b0c3" stroke-width="1.3"/>
<circle cx="3.9" cy="4" r="0.9" fill="#9aa0b2"/><circle cx="32.6" cy="4" r="0.9" fill="#9aa0b2"/><circle cx="3.9" cy="36.2" r="0.9" fill="#9aa0b2"/>
<g transform="translate(29,31.4)"><path d="M0.6 12.6 V1.4 Q0.6 0.6 1.4 0.6 H6.2 L7.4 2.6 H16.4 V12.6 Z" fill="#f5cf7e" stroke="#b48a3a" stroke-width="1"/>
<rect x="1.4" y="3.6" width="14.4" height="8.4" fill="url(#mf)"/></g></svg>
<span class="t" style="left:1492.20px;top:595px;font-size:17px;line-height:23px;color:#fff;letter-spacing:-0.800px;font-weight:bold;">FAB</span>
<span class="t" style="left:1522.70px;top:626px;font-size:17px;line-height:23px;color:#a9c6e4;letter-spacing:-0.546px;">Release management</span>
<span class="t" style="left:1522.70px;top:657px;font-size:17px;line-height:23px;color:#a9c6e4;letter-spacing:-0.384px;">Local Path</span>
<span class="t" style="left:1702.60px;top:626px;font-size:17px;line-height:23px;color:#fff;letter-spacing:-0.166px;">Manually managed</span>
<span class="t" style="left:1702.40px;top:657px;font-size:17px;line-height:23px;color:#fff;letter-spacing:0.013px;">D:\...\Outputs\Manufacture\FAB\[Output Type]\</span>
<span class="t" style="left:2140.10px;top:594px;font-size:17px;line-height:23px;color:#fff;letter-spacing:-0.294px;text-decoration:underline;text-underline-offset:2px;text-decoration-skip-ink:none;">Change</span>
<span class="t" style="left:2212.30px;top:594px;font-size:17px;line-height:23px;color:#fff;letter-spacing:0.688px;">or</span>
<span class="t" style="left:2245.50px;top:594px;font-size:17px;line-height:23px;color:#fff;letter-spacing:-0.469px;text-decoration:underline;text-underline-offset:2px;text-decoration-skip-ink:none;">Remove</span>
<span class="t" style="left:2164.60px;top:653px;font-size:17px;line-height:23px;color:#fff;letter-spacing:-0.167px;">Generate content</span>
<span class="t" style="left:2135.60px;top:689px;font-size:17px;line-height:23px;color:#fff;letter-spacing:-0.243px;">Generate and publish</span>
<svg style="left:2294.60px;top:658.25px" width="16" height="12" viewBox="0 0 16 12"><path d="M2.4 6 H10 M8.2 2 L13.8 6 L8.2 10 Z" fill="#fff" stroke="#fff" stroke-width="1.9" stroke-linejoin="round"/></svg>
<svg style="left:2294.60px;top:694.15px" width="16" height="12" viewBox="0 0 16 12"><path d="M2.4 6 H10 M8.2 2 L13.8 6 L8.2 10 Z" fill="#fff" stroke="#fff" stroke-width="1.9" stroke-linejoin="round"/></svg>
<div style="left:1420.20px;top:736.10px;width:895.80px;height:1.00px;background:#e4e4e4;"></div>
<svg style="left:1430.40px;top:792.50px" width="47" height="46" viewBox="0 0 47 46"><defs><linearGradient id="dg" x1="0" y1="0" x2="1" y2="1"><stop offset="0" stop-color="#ffffff"/><stop offset="0.5" stop-color="#f1f6fc"/><stop offset="1" stop-color="#d6e8f8"/></linearGradient>
<linearGradient id="mf" x1="0" y1="0" x2="0" y2="1"><stop offset="0" stop-color="#fbe0a0"/><stop offset="1" stop-color="#eeb964"/></linearGradient></defs>
<rect x="1" y="1" width="34.6" height="38.4" rx="1" fill="url(#dg)" stroke="#aab1c9" stroke-width="1.8"/>
<path d="M6.2 8 H30 M6.2 11.6 H30 M6.2 15.3 H30 M6.2 18.8 H30 M6.2 22.5 H30 M6.2 26.1 H30 M6.2 29.7 H30" stroke="#a9b0c3" stroke-width="1.3"/>
<circle cx="3.9" cy="4" r="0.9" fill="#9aa0b2"/><circle cx="32.6" cy="4" r="0.9" fill="#9aa0b2"/><circle cx="3.9" cy="36.2" r="0.9" fill="#9aa0b2"/>
<g transform="translate(29,31.4)"><path d="M0.6 12.6 V1.4 Q0.6 0.6 1.4 0.6 H6.2 L7.4 2.6 H16.4 V12.6 Z" fill="#f5cf7e" stroke="#b48a3a" stroke-width="1"/>
<rect x="1.4" y="3.6" width="14.4" height="8.4" fill="url(#mf)"/></g></svg>
<span class="t" style="left:1492.20px;top:745px;font-size:17px;line-height:23px;color:#111;letter-spacing:-0.894px;font-weight:bold;">ASSEM</span>
<span class="t" style="left:1522.70px;top:776px;font-size:17px;line-height:23px;color:#7d7d7d;letter-spacing:-0.546px;">Release management</span>
<span class="t" style="left:1522.70px;top:807px;font-size:17px;line-height:23px;color:#7d7d7d;letter-spacing:-0.384px;">Local Path</span>
<span class="t" style="left:1702.60px;top:776px;font-size:17px;line-height:23px;color:#222;letter-spacing:-0.166px;">Manually managed</span>
<span class="t" style="left:1702.40px;top:807px;font-size:17px;line-height:23px;color:#222;letter-spacing:-0.039px;">D:\...\M3406-ADJ\Outputs\Manufacture\ASSEM\=ProjectName\[Output Type]\</span>
<div style="left:1420.20px;top:886.15px;width:895.80px;height:1.00px;background:#e4e4e4;"></div>
<svg style="left:1425.90px;top:935.95px" width="52" height="52" viewBox="0 0 52 52"><defs><linearGradient id="pp" x1="0" y1="0" x2="0.6" y2="1"><stop offset="0" stop-color="#ffffff"/><stop offset="1" stop-color="#dcebf9"/></linearGradient>
<linearGradient id="mf" x1="0" y1="0" x2="0" y2="1"><stop offset="0" stop-color="#fbe0a0"/><stop offset="1" stop-color="#eeb964"/></linearGradient></defs>
<path d="M7.6 0.8 H36 L45 9.8 V47.4 H7.6 Z" fill="url(#pp)" stroke="#a8b0c8" stroke-width="1.2"/>
<path d="M36 0.8 V9.8 H45" fill="#ffffff" stroke="#a8b0c8" stroke-width="1.2"/>
<rect x="0.2" y="5.2" width="29.4" height="11.4" fill="#e2061c"/>
<text x="15.6" y="14.3" font-family="Liberation Sans,sans-serif" font-size="9.6" fill="#fff" text-anchor="middle" letter-spacing="1" stroke="#fff" stroke-width="0.25">PDF</text>
<path d="M23 17.5 C23.5 24 19 33 13.5 37.5 C10 40.5 8.8 37.5 12.5 35 C18 31.5 31 28.2 38.5 29.4 C41.5 30.2 40 32.4 36.5 31.6 C30.5 30 24.5 23.5 23 17.5 Z" fill="none" stroke="#e8384a" stroke-width="1.5"/>
<text x="21.6" y="42" font-family="Liberation Sans,sans-serif" font-size="9.8" font-weight="bold" fill="#0c0c0c" textLength="21.5" lengthAdjust="spacingAndGlyphs">Adobe</text>
<g transform="translate(33.6,38.2)"><path d="M0.6 12.6 V1.4 Q0.6 0.6 1.4 0.6 H6.2 L7.4 2.6 H16.4 V12.6 Z" fill="#f5cf7e" stroke="#b48a3a" stroke-width="1"/>
<rect x="1.4" y="3.6" width="14.4" height="8.4" fill="url(#mf)"/></g></svg>
<span class="t" style="left:1492.20px;top:895px;font-size:17px;line-height:23px;color:#111;letter-spacing:-0.980px;font-weight:bold;">ASSEM_PDF</span>
<span class="t" style="left:1522.70px;top:926px;font-size:17px;line-height:23px;color:#7d7d7d;letter-spacing:-0.546px;">Release management</span>
<span class="t" style="left:1522.70px;top:957px;font-size:17px;line-height:23px;color:#7d7d7d;letter-spacing:-0.384px;">Local Path</span>
<span class="t" style="left:1702.60px;top:926px;font-size:17px;line-height:23px;color:#222;letter-spacing:-0.166px;">Manually managed</span>
<span class="t" style="left:1702.40px;top:957px;font-size:17px;line-height:23px;color:#222;letter-spacing:-0.108px;">D:\...\Outputs\Manufacture\ASSEM\=ProjectName\M3406-ADJ_Module</span>
<div style="left:1420.20px;top:1036.20px;width:895.80px;height:1.00px;background:#e4e4e4;"></div>
<svg style="left:1430.40px;top:1092.60px" width="47" height="46" viewBox="0 0 47 46"><defs><linearGradient id="dg" x1="0" y1="0" x2="1" y2="1"><stop offset="0" stop-color="#ffffff"/><stop offset="0.5" stop-color="#f1f6fc"/><stop offset="1" stop-color="#d6e8f8"/></linearGradient>
<linearGradient id="mf" x1="0" y1="0" x2="0" y2="1"><stop offset="0" stop-color="#fbe0a0"/><stop offset="1" stop-color="#eeb964"/></linearGradient></defs>
<rect x="1" y="1" width="34.6" height="38.4" rx="1" fill="url(#dg)" stroke="#aab1c9" stroke-width="1.8"/>
<path d="M6.2 8 H30 M6.2 11.6 H30 M6.2 15.3 H30 M6.2 18.8 H30 M6.2 22.5 H30 M6.2 26.1 H30 M6.2 29.7 H30" stroke="#a9b0c3" stroke-width="1.3"/>
<circle cx="3.9" cy="4" r="0.9" fill="#9aa0b2"/><circle cx="32.6" cy="4" r="0.9" fill="#9aa0b2"/><circle cx="3.9" cy="36.2" r="0.9" fill="#9aa0b2"/>
<g transform="translate(29,31.4)"><path d="M0.6 12.6 V1.4 Q0.6 0.6 1.4 0.6 H6.2 L7.4 2.6 H16.4 V12.6 Z" fill="#f5cf7e" stroke="#b48a3a" stroke-width="1"/>
<rect x="1.4" y="3.6" width="14.4" height="8.4" fill="url(#mf)"/></g></svg>
<span class="t" style="left:1492.20px;top:1045px;font-size:17px;line-height:23px;color:#111;letter-spacing:0.343px;font-weight:bold;">BOM</span>
<span class="t" style="left:1522.70px;top:1076px;font-size:17px;line-height:23px;color:#7d7d7d;letter-spacing:-0.546px;">Release management</span>
<span class="t" style="left:1522.70px;top:1107px;font-size:17px;line-height:23px;color:#7d7d7d;letter-spacing:-0.384px;">Local Path</span>
<span class="t" style="left:1702.60px;top:1076px;font-size:17px;line-height:23px;color:#222;letter-spacing:-0.166px;">Manually managed</span>
<span class="t" style="left:1702.40px;top:1107px;font-size:17px;line-height:23px;color:#222;letter-spacing:0.030px;">D:\DXP\DCDC Module\M3406-ADJ\Outputs\Manufacture\BOM\=ProjectName\</span>
<div style="left:1420.20px;top:1186.25px;width:895.80px;height:1.00px;background:#e4e4e4;"></div>
<svg style="left:1430.40px;top:1242.65px" width="47" height="46" viewBox="0 0 47 46"><defs><linearGradient id="dg" x1="0" y1="0" x2="1" y2="1"><stop offset="0" stop-color="#ffffff"/><stop offset="0.5" stop-color="#f1f6fc"/><stop offset="1" stop-color="#d6e8f8"/></linearGradient>
<linearGradient id="mf" x1="0" y1="0" x2="0" y2="1"><stop offset="0" stop-color="#fbe0a0"/><stop offset="1" stop-color="#eeb964"/></linearGradient></defs>
<rect x="1" y="1" width="34.6" height="38.4" rx="1" fill="url(#dg)" stroke="#aab1c9" stroke-width="1.8"/>
<path d="M6.2 8 H30 M6.2 11.6 H30 M6.2 15.3 H30 M6.2 18.8 H30 M6.2 22.5 H30 M6.2 26.1 H30 M6.2 29.7 H30" stroke="#a9b0c3" stroke-width="1.3"/>
<circle cx="3.9" cy="4" r="0.9" fill="#9aa0b2"/><circle cx="32.6" cy="4" r="0.9" fill="#9aa0b2"/><circle cx="3.9" cy="36.2" r="0.9" fill="#9aa0b2"/>
<g transform="translate(29,31.4)"><path d="M0.6 12.6 V1.4 Q0.6 0.6 1.4 0.6 H6.2 L7.4 2.6 H16.4 V12.6 Z" fill="#f5cf7e" stroke="#b48a3a" stroke-width="1"/>
<rect x="1.4" y="3.6" width="14.4" height="8.4" fill="url(#mf)"/></g></svg>
<span class="t" style="left:1492.20px;top:1195px;font-size:17px;line-height:23px;color:#111;letter-spacing:-1.177px;font-weight:bold;">STEP</span>
<span class="t" style="left:1522.70px;top:1226px;font-size:17px;line-height:23px;color:#7d7d7d;letter-spacing:-0.546px;">Release management</span>
<span class="t" style="left:1522.70px;top:1257px;font-size:17px;line-height:23px;color:#7d7d7d;letter-spacing:-0.384px;">Local Path</span>
<span class="t" style="left:1702.60px;top:1226px;font-size:17px;line-height:23px;color:#222;letter-spacing:-0.166px;">Manually managed</span>
<span class="t" style="left:1702.40px;top:1257px;font-size:17px;line-height:23px;color:#222;letter-spacing:-0.136px;">D:\DXP\DCDC Module\M3406-ADJ\Outputs\STEP\=ProjectName\</span>
<div style="left:1420.20px;top:1336.30px;width:895.80px;height:1.00px;background:#e4e4e4;"></div>
<svg style="left:1430.40px;top:1392.70px" width="47" height="46" viewBox="0 0 47 46"><defs><linearGradient id="dg" x1="0" y1="0" x2="1" y2="1"><stop offset="0" stop-color="#ffffff"/><stop offset="0.5" stop-color="#f1f6fc"/><stop offset="1" stop-color="#d6e8f8"/></linearGradient>
<linearGradient id="mf" x1="0" y1="0" x2="0" y2="1"><stop offset="0" stop-color="#fbe0a0"/><stop offset="1" stop-color="#eeb964"/></linearGradient></defs>
<rect x="1" y="1" width="34.6" height="38.4" rx="1" fill="url(#dg)" stroke="#aab1c9" stroke-width="1.8"/>
<path d="M6.2 8 H30 M6.2 11.6 H30 M6.2 15.3 H30 M6.2 18.8 H30 M6.2 22.5 H30 M6.2 26.1 H30 M6.2 29.7 H30" stroke="#a9b0c3" stroke-width="1.3"/>
<circle cx="3.9" cy="4" r="0.9" fill="#9aa0b2"/><circle cx="32.6" cy="4" r="0.9" fill="#9aa0b2"/><circle cx="3.9" cy="36.2" r="0.9" fill="#9aa0b2"/>
<g transform="translate(29,31.4)"><path d="M0.6 12.6 V1.4 Q0.6 0.6 1.4 0.6 H6.2 L7.4 2.6 H16.4 V12.6 Z" fill="#f5cf7e" stroke="#b48a3a" stroke-width="1"/>
<rect x="1.4" y="3.6" width="14.4" height="8.4" fill="url(#mf)"/></g></svg>
<span class="t" style="left:1492.20px;top:1345px;font-size:17px;line-height:23px;color:#111;letter-spacing:1.900px;font-weight:bold;">钢网</span>
<span class="t" style="left:1522.70px;top:1376px;font-size:17px;line-height:23px;color:#7d7d7d;letter-spacing:-0.546px;">Release management</span>
<span class="t" style="left:1522.70px;top:1407px;font-size:17px;line-height:23px;color:#7d7d7d;letter-spacing:-0.384px;">Local Path</span>
<span class="t" style="left:1702.60px;top:1376px;font-size:17px;line-height:23px;color:#222;letter-spacing:-0.166px;">Manually managed</span>
<span class="t" style="left:1702.40px;top:1407px;font-size:17px;line-height:23px;color:#222;letter-spacing:0.026px;">D:\DXP\DCDC Module\M3406-ADJ\Outputs\Manufacture\钢网\=ProjectName\</span>
<div style="left:1420.20px;top:1458.30px;width:913.60px;height:1622.00px;background:#f5f5f5;"></div>
<div style="left:1420.20px;top:1467.00px;width:895.80px;height:26.20px;background:#e6e6e6;"></div>
<div style="left:1420.20px;top:1493.00px;width:895.80px;height:1.00px;background:#bdbdbd;"></div>
<div style="left:1420.20px;top:1494.00px;width:895.80px;height:28.00px;background:#e6e6e6;"></div>
<div style="left:1420.20px;top:1522.00px;width:895.80px;height:1.00px;background:#bdbdbd;"></div>
<div style="left:1420.20px;top:1523.00px;width:895.80px;height:1622.00px;background:#f8f8f8;"></div>
<div style="left:2315.40px;top:1471.00px;width:1.00px;height:19.00px;background:#bdbdbd;"></div>
<div style="left:2316.00px;top:1523.00px;width:1.00px;height:100.00px;background:#e6e6e6;"></div>
<span class="t" style="left:1823.05px;top:1469px;font-size:17px;line-height:23px;color:#111;letter-spacing:0.392px;font-weight:bold;">Hard Copy</span>
<span class="t" style="left:1830.25px;top:1498px;font-size:17px;line-height:23px;color:#222;letter-spacing:-0.298px;">Job Name</span>
<svg style="left:1440.40px;top:1589.60px" width="18" height="16" viewBox="0 0 18 16"><defs><linearGradient id="aj" x1="0" y1="0" x2="0" y2="1"><stop offset="0" stop-color="#ffffff"/><stop offset="1" stop-color="#dce9fa"/></linearGradient></defs><rect x="1" y="1" width="15" height="13.2" fill="url(#aj)" stroke="#b4bcd2" stroke-width="1.2"/><path d="M4 7.5 H10 M8.4 4.6 L12.4 7.5 L8.4 10.4 Z" stroke="#2f4fb0" stroke-width="1.5" fill="#2f4fb0" stroke-linejoin="round"/></svg>
<span class="t" style="left:1477.40px;top:1586px;font-size:17px;line-height:23px;color:#222;letter-spacing:-0.161px;">[Add New Print Job]</span>
<svg style="left:1280px;top:630px" width="200" height="350" viewBox="1280 630 200 350">
<g fill="none" stroke="#6db677" stroke-width="3.3" stroke-linejoin="miter">
<path d="M1306 952.0 H1354.6 L1407.8 661.8 H1440"/>
<path d="M1306 925.6 H1354.6 L1407.8 661.8 H1440"/>
<path d="M1306 899.2 H1354.6 L1407.8 661.8 H1440"/>
</g>
<path d="M1448.6 661.8 L1419.6 652.6 L1427.6 661.8 L1419.6 671 Z" fill="#6db677"/>
<circle cx="1306.6" cy="899.2" r="9.4" fill="#6db677"/><circle cx="1306.6" cy="925.6" r="9.4" fill="#6db677"/><circle cx="1306.6" cy="952.0" r="9.4" fill="#6db677"/>
</svg>
<span class="t" style="left:1302.29px;top:888px;font-size:15.5px;line-height:21px;color:#1d3320;letter-spacing:0.000px;">1</span>
<span class="t" style="left:1302.29px;top:914px;font-size:15.5px;line-height:21px;color:#1d3320;letter-spacing:0.000px;">2</span>
<span class="t" style="left:1302.29px;top:940px;font-size:15.5px;line-height:21px;color:#1d3320;letter-spacing:0.000px;">3</span>
<svg style="left:2321.00px;top:385.40px" width="10" height="6" viewBox="0 0 10 6"><path d="M0.4 5.4 L4.6 0.6 L8.8 5.4 Z" fill="#bdbdbd"/></svg>
<div style="left:2322.00px;top:395.80px;width:7.20px;height:569.40px;background:#a9a9a9;border-radius:4px;"></div>
<svg style="left:2321.00px;top:1447.20px" width="10" height="6" viewBox="0 0 10 6"><path d="M0.4 0.4 L4.6 5.2 L8.8 0.4 Z" fill="#bdbdbd"/></svg>
<svg style="left:2321.00px;top:1472.00px" width="10" height="6" viewBox="0 0 10 6"><path d="M0.4 5.4 L4.6 0.6 L8.8 5.4 Z" fill="#bdbdbd"/></svg>
<div style="left:2322.00px;top:1556.00px;width:7.20px;height:80.00px;background:#a9a9a9;border-radius:4px;"></div>
<span class="t" style="left:2143.20px;top:1591px;font-size:18.6px;line-height:25px;color:rgba(240,240,240,0.95);letter-spacing:0.270px;text-shadow:0 0 1px #666,1px 1px 1px #6a6a6a,-0.5px -0.5px 0.5px #999;font-family:&quot;Liberation Sans&quot;,&quot;Noto Sans CJK SC&quot;,sans-serif;">CSDN @e想不出昵称o</span>
</div></body></html>
